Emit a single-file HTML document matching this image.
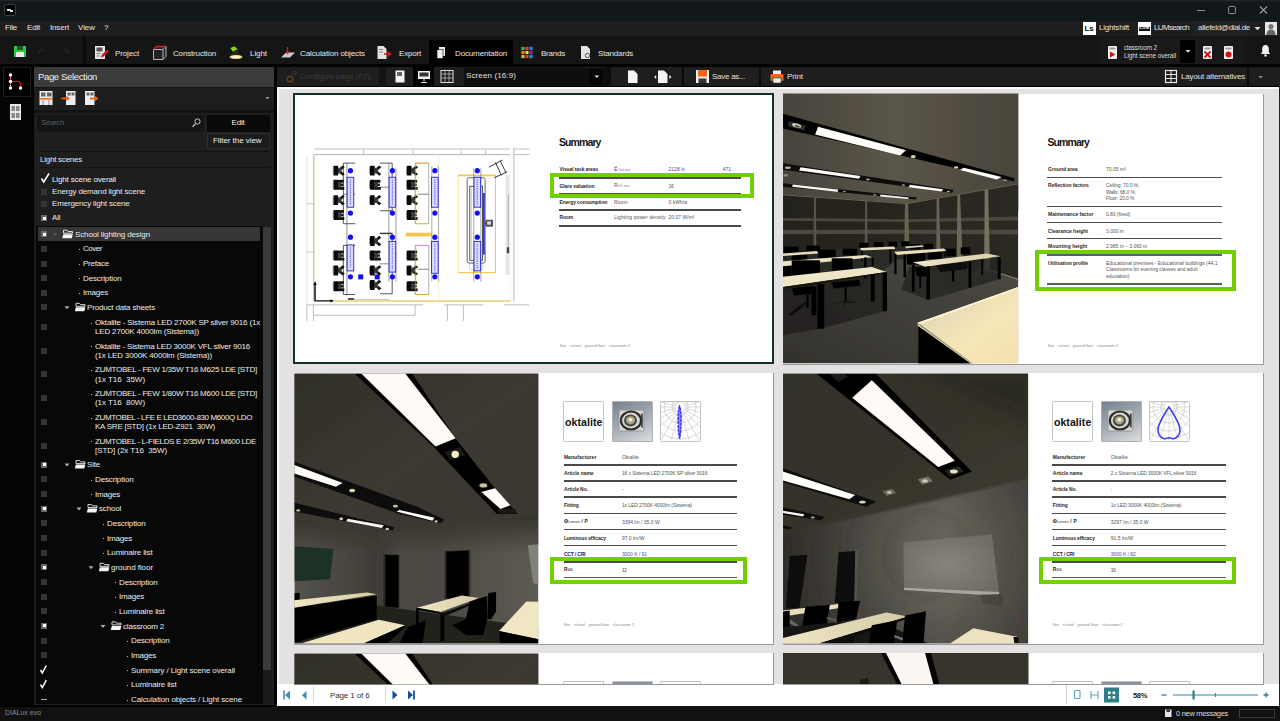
<!DOCTYPE html>
<html><head><meta charset="utf-8"><title>DIALux evo</title>
<style>
html,body{margin:0;padding:0;background:#000;}
body{width:1280px;height:721px;position:relative;overflow:hidden;font-family:"Liberation Sans",sans-serif;}
.t{position:absolute;white-space:pre;display:block;}
.r{position:absolute;}
svg{position:absolute;left:0;top:0;}
</style></head><body>
<div class="r" style="left:0.00px;top:0.00px;width:1280.00px;height:20.50px;background:#12171a;background:linear-gradient(#22292d 0,#161b1e 1.500px,#12171a 3px);"></div>
<div class="r" style="left:0.00px;top:20.50px;width:1280.00px;height:15.50px;background:#1e1e1e;"></div>
<div class="r" style="left:0.00px;top:36.00px;width:1280.00px;height:28.00px;background:#151515;"></div>
<div class="r" style="left:0.00px;top:63.50px;width:1280.00px;height:3.50px;background:#020202;"></div>
<div class="r" style="left:4.00px;top:4.00px;width:12.00px;height:12.00px;background:#000;border:1px solid #3a3d40;border-radius:2px;box-sizing:border-box;"></div>
<div class="r" style="left:7.00px;top:9.00px;width:4.00px;height:1.50px;background:#ddd;"></div>
<div class="r" style="left:10.00px;top:10.00px;width:3.00px;height:1.50px;background:#ddd;"></div>
<div class="r" style="left:1197.00px;top:10.00px;width:8.00px;height:1.00px;background:#8a8d90;"></div>
<div class="r" style="left:1228.00px;top:6.00px;width:8.00px;height:8.00px;background:transparent;border:1px solid #8a8d90;border-radius:1.5px;box-sizing:border-box;"></div>
<svg width="1280" height="20" viewBox="0 0 1280 20"><path d="M1260 6.500l7 7M1267 6.500l-7 7" stroke="#9a9da0" stroke-width="1.100" fill="none"/></svg>
<span class="t" style="left:5.00px;top:23.20px;font-size:8.00px;line-height:9.60px;color:#e6e6e6;letter-spacing:-0.223px;">File</span>
<span class="t" style="left:27.00px;top:23.20px;font-size:8.00px;line-height:9.60px;color:#e6e6e6;letter-spacing:-0.196px;">Edit</span>
<span class="t" style="left:50.00px;top:23.20px;font-size:8.00px;line-height:9.60px;color:#e6e6e6;letter-spacing:-0.168px;">Insert</span>
<span class="t" style="left:78.00px;top:23.20px;font-size:8.00px;line-height:9.60px;color:#e6e6e6;letter-spacing:-0.049px;">View</span>
<span class="t" style="left:104.00px;top:23.20px;font-size:8.00px;line-height:9.60px;color:#e6e6e6;">?</span>
<div class="r" style="left:1083.00px;top:22.00px;width:13.00px;height:13.00px;background:#fff;"></div>
<span class="t" style="left:1084.50px;top:23.70px;font-size:8.00px;line-height:9.60px;color:#111;letter-spacing:-0.168px;font-weight:bold;">Ls</span>
<span class="t" style="left:1099.00px;top:23.20px;font-size:8.00px;line-height:9.60px;color:#e0e0e0;letter-spacing:-0.202px;">Lightshift</span>
<div class="r" style="left:1138.00px;top:22.00px;width:13.00px;height:13.00px;background:#fff;"></div>
<div class="r" style="left:1139.00px;top:26.50px;width:11.00px;height:4.50px;background:#111;"></div>
<span class="t" style="left:1139.50px;top:26.30px;font-size:4.00px;line-height:4.80px;color:#fff;letter-spacing:0.445px;font-weight:bold;">LUM</span>
<span class="t" style="left:1154.00px;top:23.20px;font-size:8.00px;line-height:9.60px;color:#e0e0e0;letter-spacing:-0.656px;">LUMsearch</span>
<div class="r" style="left:1194.00px;top:21.00px;width:54.00px;height:15.00px;background:#222;"></div>
<span class="t" style="left:1198.00px;top:23.20px;font-size:8.00px;line-height:9.60px;color:#e0e0e0;letter-spacing:-0.315px;">allefeld@dial.de</span>
<svg width="1280" height="40" viewBox="0 0 1280 40"><path d="M1254.5 27l3 3.2l3-3.2z" fill="#e0e0e0"/></svg>
<div class="r" style="left:1265.00px;top:22.00px;width:12.00px;height:13.00px;background:#e8e8e8;"></div>
<svg width="1280" height="40" viewBox="0 0 1280 40"><circle cx="1271" cy="26.5" r="2.6" fill="#777"/><path d="M1266.5 35c0-4 2-5.5 4.5-5.5s4.5 1.500 4.500 5.500z" fill="#666"/></svg>
<div class="r" style="left:83.00px;top:36.00px;width:2.50px;height:28.00px;background:#0a0a0a;"></div>
<div class="r" style="left:14.00px;top:46.00px;width:12.00px;height:11.00px;background:#2fc63a;"></div>
<div class="r" style="left:17.00px;top:46.00px;width:6.00px;height:4.00px;background:#1a5a20;"></div>
<div class="r" style="left:16.00px;top:52.00px;width:8.00px;height:5.00px;background:#f4e8f0;"></div>
<span class="t" style="left:37.00px;top:46.60px;font-size:9.00px;line-height:10.80px;color:#2a2a2a;">↶</span>
<span class="t" style="left:62.00px;top:46.60px;font-size:9.00px;line-height:10.80px;color:#2a2a2a;">↷</span>
<div class="r" style="left:429.00px;top:40.00px;width:84.00px;height:24.00px;background:#000;"></div>
<span class="t" style="left:115.00px;top:48.70px;font-size:8.00px;line-height:9.60px;color:#e6e6e6;letter-spacing:-0.128px;">Project</span>
<span class="t" style="left:173.00px;top:48.70px;font-size:8.00px;line-height:9.60px;color:#e6e6e6;letter-spacing:-0.159px;">Construction</span>
<span class="t" style="left:250.00px;top:48.70px;font-size:8.00px;line-height:9.60px;color:#e6e6e6;letter-spacing:-0.069px;">Light</span>
<span class="t" style="left:300.00px;top:48.70px;font-size:8.00px;line-height:9.60px;color:#e6e6e6;letter-spacing:-0.113px;">Calculation objects</span>
<span class="t" style="left:399.00px;top:48.70px;font-size:8.00px;line-height:9.60px;color:#e6e6e6;letter-spacing:-0.187px;">Export</span>
<span class="t" style="left:455.00px;top:48.70px;font-size:8.00px;line-height:9.60px;color:#e6e6e6;letter-spacing:-0.139px;">Documentation</span>
<span class="t" style="left:541.00px;top:48.70px;font-size:8.00px;line-height:9.60px;color:#e6e6e6;letter-spacing:-0.224px;">Brands</span>
<span class="t" style="left:598.00px;top:48.70px;font-size:8.00px;line-height:9.60px;color:#e6e6e6;letter-spacing:-0.163px;">Standards</span>
<svg width="1280" height="70" viewBox="0 0 1280 70">
<!-- project -->
<rect x="95" y="46" width="10" height="13" fill="#e8e8e8"/><rect x="96.500" y="47.500" width="6" height="4" fill="#555"/><rect x="96.500" y="53" width="4" height="1" fill="#777"/><rect x="96.500" y="55.500" width="4" height="1" fill="#777"/>
<path d="M101 58l1-3.500l5-5l1.800 1.800l-5 5z" fill="#d01818"/>
<!-- construction -->
<path d="M153.500 49.500l3-3h9.500v10l-3 3h-9.500z" fill="#222" stroke="#b8b8b8" stroke-width="1"/><path d="M153.500 49.500h9.500v10M163 49.500l3-3" stroke="#b8b8b8" stroke-width="1" fill="none"/><path d="M153.500 49.500l3-3h9.500" stroke="#e02020" stroke-width="1.300" fill="none"/>
<!-- light -->
<path d="M232.500 50.900l4.600-1.200l3.400 5.500h-9.400z" fill="#2e2410"/><path d="M230.400 48l4.100-1.700l3.100 3l-4.800 2.100z" fill="#7ed321"/><ellipse cx="236" cy="57" rx="6.500" ry="2" fill="#d9cf8e"/><ellipse cx="236" cy="56.800" rx="4.500" ry="1.200" fill="#fbf4c8"/>
<!-- calc objects -->
<path d="M281 57.500l5-5h9l-5 5z" fill="#c8c8c8"/><path d="M287.500 47v6" stroke="#d02020" stroke-width="1.300"/><path d="M285.500 51.500l2 3l2-3z" fill="#d02020"/>
<!-- export -->
<path d="M377.500 46h6l3 3v10h-9z" fill="#e4e4e4"/><path d="M384 54h6M387.500 51.500l3 2.500l-3 2.500" stroke="#d01818" stroke-width="1.600" fill="none"/><rect x="379" y="49" width="4" height="1" fill="#888"/><rect x="379" y="51.500" width="4" height="1" fill="#888"/>
<!-- documentation -->
<rect x="439" y="47" width="6" height="9" fill="#f0f0f0"/><rect x="437" y="49.500" width="6" height="9" fill="#f0f0f0" stroke="#000" stroke-width=".6"/>
<!-- brands -->
<rect x="520" y="46" width="14" height="13" fill="#222" rx="1"/>
<rect x="521.500" y="47" width="3" height="3" fill="#4caf50"/><rect x="525.500" y="47" width="3" height="3" fill="#e53935"/><rect x="529.500" y="47" width="3" height="3" fill="#1e88e5"/>
<rect x="521.500" y="51" width="3" height="3" fill="#fb8c00"/><rect x="525.500" y="51" width="3" height="3" fill="#fdd835"/><rect x="529.500" y="51" width="3" height="3" fill="#8e24aa"/>
<rect x="521.500" y="55" width="3" height="3" fill="#c0ca33"/><rect x="525.500" y="55" width="3" height="3" fill="#e53935"/><rect x="529.500" y="55" width="3" height="3" fill="#039be5"/>
<!-- standards -->
<path d="M581 46h6l3 3v10h-9z" fill="#e4e4e4"/><circle cx="587.500" cy="55.500" r="2.200" fill="none" stroke="#555" stroke-width="1"/>
</svg>
<div class="r" style="left:1099.00px;top:37.00px;width:146.00px;height:26.50px;background:#191919;"></div>
<div class="r" style="left:1180.00px;top:40.00px;width:15.00px;height:23.00px;background:#000;"></div>
<span class="t" style="left:1124.00px;top:44.10px;font-size:6.50px;line-height:7.80px;color:#dcdcdc;letter-spacing:-0.185px;">classroom 2</span>
<span class="t" style="left:1124.00px;top:51.60px;font-size:6.50px;line-height:7.80px;color:#dcdcdc;letter-spacing:-0.116px;">Light scene overall</span>
<svg width="1280" height="70" viewBox="0 0 1280 70">
<rect x="1108" y="46" width="9" height="13" rx="1" fill="#f2f2f2"/><rect x="1109.500" y="47.500" width="6" height="2" fill="#999"/><path d="M1110 51.500l5.500 3l-5.500 3z" fill="#d01010"/>
<path d="M1185.500 50l2.500 2.800l2.500-2.800z" fill="#e0e0e0"/>
<rect x="1203" y="46" width="9" height="13" rx="1" fill="#f2f2f2"/><rect x="1204.500" y="47.500" width="6" height="2" fill="#999"/><path d="M1204.500 51.500l6 6M1210.500 51.500l-6 6" stroke="#d01010" stroke-width="1.800"/>
<rect x="1224" y="46" width="9" height="13" rx="1" fill="#f2f2f2"/><rect x="1225.500" y="47.500" width="6" height="2" fill="#999"/><circle cx="1228.500" cy="54.500" r="3" fill="#d01010"/>
<path d="M1265.500 45c2.300 0 3.300 1.800 3.300 4v3l1.400 2h-9.400l1.400-2v-3c0-2.200 1-4 3.300-4z" fill="#f0f0f0"/><circle cx="1265.500" cy="55.500" r="1.200" fill="#f0f0f0"/>
</svg>
<div class="r" style="left:0.00px;top:67.00px;width:33.00px;height:639.00px;background:#050505;"></div>
<div class="r" style="left:3.00px;top:67.00px;width:28.00px;height:30.00px;background:#000;border:1px solid #1c1c1c;box-sizing:border-box;"></div>
<svg width="40" height="130" viewBox="0 0 40 130">
<path d="M10.500 75v12.500M10.500 81.500h7.500q2.500 0 2.500 2.500v3.500" stroke="#d01818" stroke-width="1.200" fill="none"/>
<path d="M10.500 75v12" stroke="#eee" stroke-width="1" stroke-dasharray="1 1.500"/>
<circle cx="10.500" cy="75" r="1.700" fill="#fff"/><circle cx="10.500" cy="81.500" r="1.700" fill="#fff"/><circle cx="10.500" cy="88" r="1.700" fill="#fff"/><circle cx="20.500" cy="88" r="1.700" fill="#fff"/>
<rect x="10" y="104" width="11" height="16" fill="#e8e8e8"/>
<rect x="11.500" y="106" width="3.500" height="5" fill="#888"/><rect x="16" y="106" width="3.500" height="5" fill="#888"/><rect x="11.500" y="113" width="3.500" height="5" fill="#888"/><rect x="16" y="113" width="3.500" height="5" fill="#888"/>
</svg>
<div class="r" style="left:277.00px;top:66.80px;width:1003.00px;height:19.70px;background:#1e1e1e;"></div>
<div class="r" style="left:379.00px;top:67.00px;width:7.00px;height:19.50px;background:#141414;"></div>
<span class="t" style="left:300.00px;top:71.70px;font-size:8.00px;line-height:9.60px;color:#3c3c3c;letter-spacing:-0.084px;">Configure page (F2)</span>
<div class="r" style="left:413.00px;top:67.00px;width:21.00px;height:19.50px;background:#000;"></div>
<div class="r" style="left:463.50px;top:68.00px;width:141.00px;height:18.00px;background:#0e0e0e;"></div>
<div class="r" style="left:590.00px;top:69.00px;width:13.00px;height:16.00px;background:#060606;"></div>
<span class="t" style="left:466.00px;top:71.20px;font-size:8.00px;line-height:9.60px;color:#e0e0e0;letter-spacing:0.118px;">Screen (16:9)</span>
<div class="r" style="left:604.50px;top:67.00px;width:6.00px;height:19.50px;background:#0c0c0c;"></div>
<div class="r" style="left:682.00px;top:67.00px;width:1.50px;height:19.50px;background:#0a0a0a;"></div>
<div class="r" style="left:759.00px;top:67.00px;width:1.50px;height:19.50px;background:#0a0a0a;"></div>
<span class="t" style="left:712.00px;top:71.70px;font-size:8.00px;line-height:9.60px;color:#e0e0e0;letter-spacing:-0.257px;">Save as...</span>
<span class="t" style="left:787.00px;top:72.20px;font-size:8.00px;line-height:9.60px;color:#e0e0e0;letter-spacing:-0.090px;">Print</span>
<span class="t" style="left:1181.00px;top:72.20px;font-size:8.00px;line-height:9.60px;color:#e0e0e0;letter-spacing:-0.166px;">Layout alternatives</span>
<div class="r" style="left:1247.00px;top:67.00px;width:1.50px;height:19.50px;background:#0a0a0a;"></div>
<svg width="1280" height="90" viewBox="0 0 1280 90">
<circle cx="290" cy="79" r="2.800" fill="none" stroke="#5a4418" stroke-width="1.400"/><circle cx="294.500" cy="73" r="1.800" fill="none" stroke="#3c3c3c" stroke-width="1"/>
<rect x="395.500" y="70.500" width="9" height="12" fill="#f4f4f4"/><rect x="397" y="72" width="5" height="4" fill="#666"/>
<rect x="418" y="71" width="12" height="8" fill="#f0f0f0"/><rect x="419.500" y="72.500" width="9" height="4" fill="#333"/><path d="M424 79v2.500M421 82.500h6" stroke="#ddd" stroke-width="1"/>
<rect x="441" y="70.500" width="12" height="12" fill="#1c1c1c" stroke="#ddd" stroke-width="1"/><path d="M441 74h12M445 70.500v12M449 70.500v12M441 78h12" stroke="#bbb" stroke-width=".8"/>
<path d="M594.500 75.500l2.300 2.600l2.300-2.600z" fill="#e8e8e8"/>
<path d="M628 70.500h6l3.500 3.500v9h-9.500z" fill="#f6f6f6"/>
<path d="M658 70.500h6l3.500 3.500v9h-9.500z" fill="#f6f6f6"/><path d="M654 77l2.200-2v4zM671.500 77l-2.200-2v4z" fill="#eee"/>
<rect x="696" y="70" width="13" height="13" fill="#eee"/><rect x="698" y="70" width="9" height="6.500" fill="#f0641e"/><rect x="698.500" y="78.500" width="8" height="4.500" fill="#333"/>
<rect x="770.500" y="74" width="13" height="7" rx="1" fill="#f0641e"/><rect x="773" y="70.500" width="8" height="3.500" fill="#eee"/><rect x="773" y="78" width="8" height="5" fill="#eee" stroke="#333" stroke-width=".6"/>
<rect x="1165.500" y="70.500" width="11" height="12" fill="none" stroke="#e8e8e8" stroke-width="1.200"/><path d="M1165.500 74.500h11M1165.500 78.500h11M1171 70.500v12" stroke="#e8e8e8" stroke-width="1"/>
<path d="M1258.500 76l2.200 2.500l2.200-2.500z" fill="#888"/>
</svg>
<div class="r" style="left:277.00px;top:86.50px;width:1001.50px;height:597.50px;background:#e3e1e2;"></div>
<div class="r" style="left:277.00px;top:86.50px;width:1001.50px;height:2.00px;background:#fbfbfb;"></div>
<div class="r" style="left:277.00px;top:86.50px;width:1.50px;height:597.50px;background:#f6f6f6;"></div>
<div class="r" style="left:1278.50px;top:86.50px;width:1.50px;height:620.00px;background:#222;"></div>
<div class="r" style="left:34.00px;top:67.00px;width:239.50px;height:639.00px;background:#1e1e1e;"></div>
<div class="r" style="left:34.00px;top:67.00px;width:239.50px;height:19.50px;background:#3b3b3b;"></div>
<span class="t" style="left:38.00px;top:71.30px;font-size:9.50px;line-height:11.40px;color:#f0f0f0;letter-spacing:-0.350px;">Page Selection</span>
<div class="r" style="left:34.00px;top:86.50px;width:239.50px;height:1.50px;background:#141414;"></div>
<div class="r" style="left:34.00px;top:110.00px;width:239.50px;height:3.00px;background:#121212;"></div>
<svg width="280" height="120" viewBox="0 0 280 120">
<g>
<rect x="39.500" y="91" width="13" height="14" fill="#eee"/><rect x="41" y="92.500" width="4.500" height="4" fill="#666"/><rect x="47" y="92.500" width="4.500" height="4" fill="#666"/><rect x="39.500" y="98" width="13" height="1.600" fill="#f07020"/><path d="M43 100v5M49 100v5" stroke="#888" stroke-width="1"/>
<rect x="66" y="91" width="9.500" height="14" fill="#eee"/><rect x="67.500" y="92.500" width="3" height="3" fill="#666"/><rect x="71.500" y="92.500" width="3" height="3" fill="#666"/><path d="M61.500 98.500h6" stroke="#f06010" stroke-width="1.800"/><path d="M66.500 95.800l3.500 2.700l-3.500 2.700z" fill="#f06010"/>
<rect x="85" y="91" width="9.500" height="14" fill="#eee"/><rect x="86.500" y="92.500" width="3" height="3" fill="#666"/><rect x="90.500" y="92.500" width="3" height="3" fill="#666"/><path d="M90 98.500h6" stroke="#f06010" stroke-width="1.800"/><path d="M95 95.800l3.500 2.700l-3.500 2.700z" fill="#f06010"/>
<path d="M265.500 97l2 2.300l2-2.300z" fill="#999"/>
</g></svg>
<div class="r" style="left:37.00px;top:115.00px;width:166.50px;height:16.50px;background:#151515;"></div>
<span class="t" style="left:41.00px;top:118.20px;font-size:8.00px;line-height:9.60px;color:#5a5a5a;letter-spacing:-0.391px;font-style:italic;">Search</span>
<svg width="280" height="140" viewBox="0 0 280 140"><circle cx="197.500" cy="121.500" r="2.600" fill="none" stroke="#c8c8c8" stroke-width="1"/><path d="M195.600 123.600l-3 3.200" stroke="#c8c8c8" stroke-width="1.300"/></svg>
<div class="r" style="left:207.00px;top:115.00px;width:62.50px;height:16.50px;background:#090909;"></div>
<span class="t" style="left:231.50px;top:118.20px;font-size:8.00px;line-height:9.60px;color:#f0f0f0;letter-spacing:-0.196px;">Edit</span>
<div class="r" style="left:206.50px;top:133.00px;width:63.00px;height:16.00px;background:#1c1c1c;border:1px solid #2c2c2c;box-sizing:border-box;"></div>
<span class="t" style="left:213.00px;top:136.00px;font-size:8.00px;line-height:9.60px;color:#f0f0f0;letter-spacing:-0.056px;">Filter the view</span>
<div class="r" style="left:39.00px;top:151.00px;width:230.50px;height:1.00px;background:#141414;"></div>
<span class="t" style="left:40.00px;top:154.70px;font-size:8.00px;line-height:9.60px;color:#e8e8e8;letter-spacing:-0.243px;">Light scenes</span>
<div class="r" style="left:39.00px;top:167.00px;width:230.50px;height:1.00px;background:#141414;"></div>
<svg width="280" height="230" viewBox="0 0 280 230"><path d="M41.500 178.500l2.200 3.500l5.300-8.500" stroke="#fff" stroke-width="1.500" fill="none"/></svg>
<span class="t" style="left:52.00px;top:175.20px;font-size:8.00px;line-height:9.60px;color:#f0f0f0;letter-spacing:-0.142px;">Light scene overall</span>
<div class="r" style="left:41.00px;top:188.50px;width:6.00px;height:6.00px;background:#343434;background-image:linear-gradient(90deg,transparent 45%,#1e1e1e 45%,#1e1e1e 55%,transparent 55%),linear-gradient(0deg,transparent 45%,#1e1e1e 45%,#1e1e1e 55%,transparent 55%);"></div>
<span class="t" style="left:52.00px;top:186.70px;font-size:8.00px;line-height:9.60px;color:#e8e8e8;letter-spacing:-0.158px;">Energy demand light scene</span>
<div class="r" style="left:41.00px;top:200.50px;width:6.00px;height:6.00px;background:#343434;background-image:linear-gradient(90deg,transparent 45%,#1e1e1e 45%,#1e1e1e 55%,transparent 55%),linear-gradient(0deg,transparent 45%,#1e1e1e 45%,#1e1e1e 55%,transparent 55%);"></div>
<span class="t" style="left:52.00px;top:198.70px;font-size:8.00px;line-height:9.60px;color:#e8e8e8;letter-spacing:-0.163px;">Emergency light scene</span>
<div class="r" style="left:41.00px;top:215.00px;width:6.00px;height:6.00px;background:#6a6a6a;"></div><div class="r" style="left:42.50px;top:216.50px;width:3.00px;height:3.00px;background:#fff;"></div>
<span class="t" style="left:52.00px;top:213.20px;font-size:8.00px;line-height:9.60px;color:#e8e8e8;letter-spacing:-0.130px;">All</span>
<div class="r" style="left:36.00px;top:226.00px;width:226.50px;height:478.00px;background:#080808;"></div>
<div class="r" style="left:38.00px;top:227.00px;width:222.00px;height:14.00px;background:#363636;"></div>
<div class="r" style="left:262.50px;top:226.00px;width:9.00px;height:478.00px;background:#1a1a1a;"></div>
<div class="r" style="left:262.80px;top:227.00px;width:8.50px;height:443.00px;background:#3a3a3a;"></div>
<div class="r" style="left:41.00px;top:231.20px;width:6.00px;height:6.00px;background:#6a6a6a;"></div><div class="r" style="left:42.50px;top:232.70px;width:3.00px;height:3.00px;background:#fff;"></div>
<svg width="280" height="721" viewBox="0 0 280 721"><path d="M52.5 233.2h5l-2.500 3z" fill="#555"/></svg>
<svg width="280" height="721" viewBox="0 0 280 721"><path d="M63.5 230.2h3.500l1 1.300h4.500v1.700h-9z" fill="none" stroke="#f0f0f0" stroke-width=".9"/><path d="M63.3 234.2h9.500l-1 4h-9.500z" fill="#f4f4f4"/></svg>
<span class="t" style="left:75.00px;top:229.90px;font-size:8.00px;line-height:9.60px;color:#ececec;letter-spacing:-0.129px;">School lighting design</span>
<div class="r" style="left:41.00px;top:245.75px;width:6.00px;height:6.00px;background:#343434;background-image:linear-gradient(90deg,transparent 45%,#1e1e1e 45%,#1e1e1e 55%,transparent 55%),linear-gradient(0deg,transparent 45%,#1e1e1e 45%,#1e1e1e 55%,transparent 55%);"></div>
<div class="r" style="left:79.00px;top:249.05px;width:1.00px;height:1.00px;background:#bbb;"></div>
<span class="t" style="left:83.00px;top:244.45px;font-size:8.00px;line-height:9.60px;color:#ececec;letter-spacing:-0.468px;">Cover</span>
<div class="r" style="left:41.00px;top:260.50px;width:6.00px;height:6.00px;background:#343434;background-image:linear-gradient(90deg,transparent 45%,#1e1e1e 45%,#1e1e1e 55%,transparent 55%),linear-gradient(0deg,transparent 45%,#1e1e1e 45%,#1e1e1e 55%,transparent 55%);"></div>
<div class="r" style="left:79.00px;top:263.80px;width:1.00px;height:1.00px;background:#bbb;"></div>
<span class="t" style="left:83.00px;top:259.20px;font-size:8.00px;line-height:9.60px;color:#ececec;letter-spacing:-0.224px;">Preface</span>
<div class="r" style="left:41.00px;top:275.10px;width:6.00px;height:6.00px;background:#343434;background-image:linear-gradient(90deg,transparent 45%,#1e1e1e 45%,#1e1e1e 55%,transparent 55%),linear-gradient(0deg,transparent 45%,#1e1e1e 45%,#1e1e1e 55%,transparent 55%);"></div>
<div class="r" style="left:79.00px;top:278.40px;width:1.00px;height:1.00px;background:#bbb;"></div>
<span class="t" style="left:83.00px;top:273.80px;font-size:8.00px;line-height:9.60px;color:#ececec;letter-spacing:-0.138px;">Description</span>
<div class="r" style="left:41.00px;top:289.75px;width:6.00px;height:6.00px;background:#343434;background-image:linear-gradient(90deg,transparent 45%,#1e1e1e 45%,#1e1e1e 55%,transparent 55%),linear-gradient(0deg,transparent 45%,#1e1e1e 45%,#1e1e1e 55%,transparent 55%);"></div>
<div class="r" style="left:79.00px;top:293.05px;width:1.00px;height:1.00px;background:#bbb;"></div>
<span class="t" style="left:83.00px;top:288.45px;font-size:8.00px;line-height:9.60px;color:#ececec;letter-spacing:-0.205px;">Images</span>
<div class="r" style="left:41.00px;top:304.30px;width:6.00px;height:6.00px;background:#343434;background-image:linear-gradient(90deg,transparent 45%,#1e1e1e 45%,#1e1e1e 55%,transparent 55%),linear-gradient(0deg,transparent 45%,#1e1e1e 45%,#1e1e1e 55%,transparent 55%);"></div>
<svg width="280" height="721" viewBox="0 0 280 721"><path d="M64.5 306.3h5l-2.500 3z" fill="#aaa"/></svg>
<svg width="280" height="721" viewBox="0 0 280 721"><path d="M76.0 303.3h3.500l1 1.300h4.500v1.700h-9z" fill="none" stroke="#f0f0f0" stroke-width=".9"/><path d="M75.8 307.3h9.500l-1 4h-9.500z" fill="#f4f4f4"/></svg>
<span class="t" style="left:87.00px;top:303.00px;font-size:8.00px;line-height:9.60px;color:#ececec;letter-spacing:-0.166px;">Product data sheets</span>
<div class="r" style="left:41.00px;top:323.90px;width:6.00px;height:6.00px;background:#343434;background-image:linear-gradient(90deg,transparent 45%,#1e1e1e 45%,#1e1e1e 55%,transparent 55%),linear-gradient(0deg,transparent 45%,#1e1e1e 45%,#1e1e1e 55%,transparent 55%);"></div>
<div class="r" style="left:91.00px;top:322.60px;width:1.00px;height:1.00px;background:#bbb;"></div>
<span class="t" style="left:95.00px;top:317.90px;font-size:8.00px;line-height:9.60px;color:#ececec;letter-spacing:-0.176px;">Oktalite - Sistema LED 2700K SP silver 9016 (1x</span>
<span class="t" style="left:95.00px;top:327.30px;font-size:8.00px;line-height:9.60px;color:#ececec;letter-spacing:-0.166px;">LED 2700K 4000lm (Sistema))</span>
<div class="r" style="left:41.00px;top:347.50px;width:6.00px;height:6.00px;background:#343434;background-image:linear-gradient(90deg,transparent 45%,#1e1e1e 45%,#1e1e1e 55%,transparent 55%),linear-gradient(0deg,transparent 45%,#1e1e1e 45%,#1e1e1e 55%,transparent 55%);"></div>
<div class="r" style="left:91.00px;top:346.20px;width:1.00px;height:1.00px;background:#bbb;"></div>
<span class="t" style="left:95.00px;top:341.50px;font-size:8.00px;line-height:9.60px;color:#ececec;letter-spacing:-0.199px;">Oktalite - Sistema LED 3000K VFL silver 9016</span>
<span class="t" style="left:95.00px;top:350.90px;font-size:8.00px;line-height:9.60px;color:#ececec;letter-spacing:-0.156px;">(1x LED 3000K 4000lm (Sistema))</span>
<div class="r" style="left:41.00px;top:371.40px;width:6.00px;height:6.00px;background:#343434;background-image:linear-gradient(90deg,transparent 45%,#1e1e1e 45%,#1e1e1e 55%,transparent 55%),linear-gradient(0deg,transparent 45%,#1e1e1e 45%,#1e1e1e 55%,transparent 55%);"></div>
<div class="r" style="left:91.00px;top:370.10px;width:1.00px;height:1.00px;background:#bbb;"></div>
<span class="t" style="left:95.00px;top:365.40px;font-size:8.00px;line-height:9.60px;color:#ececec;letter-spacing:-0.254px;">ZUMTOBEL - FEW 1/35W T16 M625 LDE [STD]</span>
<span class="t" style="left:95.00px;top:374.80px;font-size:8.00px;line-height:9.60px;color:#ececec;letter-spacing:-0.041px;">(1x T16  35W)</span>
<div class="r" style="left:41.00px;top:395.00px;width:6.00px;height:6.00px;background:#343434;background-image:linear-gradient(90deg,transparent 45%,#1e1e1e 45%,#1e1e1e 55%,transparent 55%),linear-gradient(0deg,transparent 45%,#1e1e1e 45%,#1e1e1e 55%,transparent 55%);"></div>
<div class="r" style="left:91.00px;top:393.70px;width:1.00px;height:1.00px;background:#bbb;"></div>
<span class="t" style="left:95.00px;top:389.00px;font-size:8.00px;line-height:9.60px;color:#ececec;letter-spacing:-0.254px;">ZUMTOBEL - FEW 1/80W T16 M600 LDE [STD]</span>
<span class="t" style="left:95.00px;top:398.40px;font-size:8.00px;line-height:9.60px;color:#ececec;letter-spacing:-0.041px;">(1x T16  80W)</span>
<div class="r" style="left:41.00px;top:418.80px;width:6.00px;height:6.00px;background:#343434;background-image:linear-gradient(90deg,transparent 45%,#1e1e1e 45%,#1e1e1e 55%,transparent 55%),linear-gradient(0deg,transparent 45%,#1e1e1e 45%,#1e1e1e 55%,transparent 55%);"></div>
<div class="r" style="left:91.00px;top:417.50px;width:1.00px;height:1.00px;background:#bbb;"></div>
<span class="t" style="left:95.00px;top:412.80px;font-size:8.00px;line-height:9.60px;color:#ececec;letter-spacing:-0.373px;">ZUMTOBEL - LFE E LED3600-830 M600Q LDO</span>
<span class="t" style="left:95.00px;top:422.20px;font-size:8.00px;line-height:9.60px;color:#ececec;letter-spacing:-0.230px;">KA SRE [STD] (1x LED-Z921  30W)</span>
<div class="r" style="left:41.00px;top:442.70px;width:6.00px;height:6.00px;background:#343434;background-image:linear-gradient(90deg,transparent 45%,#1e1e1e 45%,#1e1e1e 55%,transparent 55%),linear-gradient(0deg,transparent 45%,#1e1e1e 45%,#1e1e1e 55%,transparent 55%);"></div>
<div class="r" style="left:91.00px;top:441.40px;width:1.00px;height:1.00px;background:#bbb;"></div>
<span class="t" style="left:95.00px;top:436.70px;font-size:8.00px;line-height:9.60px;color:#ececec;letter-spacing:-0.328px;">ZUMTOBEL - L-FIELDS E 2/35W T16 M600 LDE</span>
<span class="t" style="left:95.00px;top:446.10px;font-size:8.00px;line-height:9.60px;color:#ececec;letter-spacing:-0.063px;">[STD] (2x T16  35W)</span>
<div class="r" style="left:41.00px;top:461.60px;width:6.00px;height:6.00px;background:#6a6a6a;"></div><div class="r" style="left:42.50px;top:463.10px;width:3.00px;height:3.00px;background:#fff;"></div>
<svg width="280" height="721" viewBox="0 0 280 721"><path d="M64.5 463.6h5l-2.500 3z" fill="#aaa"/></svg>
<svg width="280" height="721" viewBox="0 0 280 721"><path d="M76.0 460.6h3.500l1 1.300h4.500v1.700h-9z" fill="none" stroke="#f0f0f0" stroke-width=".9"/><path d="M75.8 464.6h9.500l-1 4h-9.500z" fill="#f4f4f4"/></svg>
<span class="t" style="left:87.00px;top:460.30px;font-size:8.00px;line-height:9.60px;color:#ececec;letter-spacing:-0.196px;">Site</span>
<div class="r" style="left:41.00px;top:476.30px;width:6.00px;height:6.00px;background:#343434;background-image:linear-gradient(90deg,transparent 45%,#1e1e1e 45%,#1e1e1e 55%,transparent 55%),linear-gradient(0deg,transparent 45%,#1e1e1e 45%,#1e1e1e 55%,transparent 55%);"></div>
<div class="r" style="left:91.00px;top:479.60px;width:1.00px;height:1.00px;background:#bbb;"></div>
<span class="t" style="left:95.00px;top:475.00px;font-size:8.00px;line-height:9.60px;color:#ececec;letter-spacing:-0.138px;">Description</span>
<div class="r" style="left:41.00px;top:491.00px;width:6.00px;height:6.00px;background:#343434;background-image:linear-gradient(90deg,transparent 45%,#1e1e1e 45%,#1e1e1e 55%,transparent 55%),linear-gradient(0deg,transparent 45%,#1e1e1e 45%,#1e1e1e 55%,transparent 55%);"></div>
<div class="r" style="left:91.00px;top:494.30px;width:1.00px;height:1.00px;background:#bbb;"></div>
<span class="t" style="left:95.00px;top:489.70px;font-size:8.00px;line-height:9.60px;color:#ececec;letter-spacing:-0.205px;">Images</span>
<div class="r" style="left:41.00px;top:505.60px;width:6.00px;height:6.00px;background:#6a6a6a;"></div><div class="r" style="left:42.50px;top:507.10px;width:3.00px;height:3.00px;background:#fff;"></div>
<svg width="280" height="721" viewBox="0 0 280 721"><path d="M76.5 507.6h5l-2.500 3z" fill="#aaa"/></svg>
<svg width="280" height="721" viewBox="0 0 280 721"><path d="M88.0 504.6h3.500l1 1.300h4.500v1.700h-9z" fill="none" stroke="#f0f0f0" stroke-width=".9"/><path d="M87.8 508.6h9.500l-1 4h-9.500z" fill="#f4f4f4"/></svg>
<span class="t" style="left:99.00px;top:504.30px;font-size:8.00px;line-height:9.60px;color:#ececec;letter-spacing:-0.187px;">school</span>
<div class="r" style="left:41.00px;top:520.30px;width:6.00px;height:6.00px;background:#343434;background-image:linear-gradient(90deg,transparent 45%,#1e1e1e 45%,#1e1e1e 55%,transparent 55%),linear-gradient(0deg,transparent 45%,#1e1e1e 45%,#1e1e1e 55%,transparent 55%);"></div>
<div class="r" style="left:103.00px;top:523.60px;width:1.00px;height:1.00px;background:#bbb;"></div>
<span class="t" style="left:107.00px;top:519.00px;font-size:8.00px;line-height:9.60px;color:#ececec;letter-spacing:-0.138px;">Description</span>
<div class="r" style="left:41.00px;top:535.00px;width:6.00px;height:6.00px;background:#343434;background-image:linear-gradient(90deg,transparent 45%,#1e1e1e 45%,#1e1e1e 55%,transparent 55%),linear-gradient(0deg,transparent 45%,#1e1e1e 45%,#1e1e1e 55%,transparent 55%);"></div>
<div class="r" style="left:103.00px;top:538.30px;width:1.00px;height:1.00px;background:#bbb;"></div>
<span class="t" style="left:107.00px;top:533.70px;font-size:8.00px;line-height:9.60px;color:#ececec;letter-spacing:-0.205px;">Images</span>
<div class="r" style="left:41.00px;top:549.60px;width:6.00px;height:6.00px;background:#343434;background-image:linear-gradient(90deg,transparent 45%,#1e1e1e 45%,#1e1e1e 55%,transparent 55%),linear-gradient(0deg,transparent 45%,#1e1e1e 45%,#1e1e1e 55%,transparent 55%);"></div>
<div class="r" style="left:103.00px;top:552.90px;width:1.00px;height:1.00px;background:#bbb;"></div>
<span class="t" style="left:107.00px;top:548.30px;font-size:8.00px;line-height:9.60px;color:#ececec;letter-spacing:-0.116px;">Luminaire list</span>
<div class="r" style="left:41.00px;top:564.30px;width:6.00px;height:6.00px;background:#6a6a6a;"></div><div class="r" style="left:42.50px;top:565.80px;width:3.00px;height:3.00px;background:#fff;"></div>
<svg width="280" height="721" viewBox="0 0 280 721"><path d="M88.5 566.3h5l-2.500 3z" fill="#aaa"/></svg>
<svg width="280" height="721" viewBox="0 0 280 721"><path d="M100.0 563.3h3.500l1 1.300h4.500v1.700h-9z" fill="none" stroke="#f0f0f0" stroke-width=".9"/><path d="M99.8 567.3h9.500l-1 4h-9.500z" fill="#f4f4f4"/></svg>
<span class="t" style="left:111.00px;top:563.00px;font-size:8.00px;line-height:9.60px;color:#ececec;letter-spacing:-0.058px;">ground floor</span>
<div class="r" style="left:41.00px;top:578.90px;width:6.00px;height:6.00px;background:#343434;background-image:linear-gradient(90deg,transparent 45%,#1e1e1e 45%,#1e1e1e 55%,transparent 55%),linear-gradient(0deg,transparent 45%,#1e1e1e 45%,#1e1e1e 55%,transparent 55%);"></div>
<div class="r" style="left:115.00px;top:582.20px;width:1.00px;height:1.00px;background:#bbb;"></div>
<span class="t" style="left:119.00px;top:577.60px;font-size:8.00px;line-height:9.60px;color:#ececec;letter-spacing:-0.138px;">Description</span>
<div class="r" style="left:41.00px;top:593.60px;width:6.00px;height:6.00px;background:#343434;background-image:linear-gradient(90deg,transparent 45%,#1e1e1e 45%,#1e1e1e 55%,transparent 55%),linear-gradient(0deg,transparent 45%,#1e1e1e 45%,#1e1e1e 55%,transparent 55%);"></div>
<div class="r" style="left:115.00px;top:596.90px;width:1.00px;height:1.00px;background:#bbb;"></div>
<span class="t" style="left:119.00px;top:592.30px;font-size:8.00px;line-height:9.60px;color:#ececec;letter-spacing:-0.205px;">Images</span>
<div class="r" style="left:41.00px;top:608.30px;width:6.00px;height:6.00px;background:#343434;background-image:linear-gradient(90deg,transparent 45%,#1e1e1e 45%,#1e1e1e 55%,transparent 55%),linear-gradient(0deg,transparent 45%,#1e1e1e 45%,#1e1e1e 55%,transparent 55%);"></div>
<div class="r" style="left:115.00px;top:611.60px;width:1.00px;height:1.00px;background:#bbb;"></div>
<span class="t" style="left:119.00px;top:607.00px;font-size:8.00px;line-height:9.60px;color:#ececec;letter-spacing:-0.116px;">Luminaire list</span>
<div class="r" style="left:41.00px;top:622.90px;width:6.00px;height:6.00px;background:#6a6a6a;"></div><div class="r" style="left:42.50px;top:624.40px;width:3.00px;height:3.00px;background:#fff;"></div>
<svg width="280" height="721" viewBox="0 0 280 721"><path d="M100.5 624.9h5l-2.500 3z" fill="#aaa"/></svg>
<svg width="280" height="721" viewBox="0 0 280 721"><path d="M112.0 621.9h3.500l1 1.300h4.500v1.700h-9z" fill="none" stroke="#f0f0f0" stroke-width=".9"/><path d="M111.8 625.9h9.500l-1 4h-9.500z" fill="#f4f4f4"/></svg>
<span class="t" style="left:123.00px;top:621.60px;font-size:8.00px;line-height:9.60px;color:#ececec;letter-spacing:-0.193px;">classroom 2</span>
<div class="r" style="left:41.00px;top:637.60px;width:6.00px;height:6.00px;background:#343434;background-image:linear-gradient(90deg,transparent 45%,#1e1e1e 45%,#1e1e1e 55%,transparent 55%),linear-gradient(0deg,transparent 45%,#1e1e1e 45%,#1e1e1e 55%,transparent 55%);"></div>
<div class="r" style="left:127.00px;top:640.90px;width:1.00px;height:1.00px;background:#bbb;"></div>
<span class="t" style="left:131.00px;top:636.30px;font-size:8.00px;line-height:9.60px;color:#ececec;letter-spacing:-0.138px;">Description</span>
<div class="r" style="left:41.00px;top:652.30px;width:6.00px;height:6.00px;background:#343434;background-image:linear-gradient(90deg,transparent 45%,#1e1e1e 45%,#1e1e1e 55%,transparent 55%),linear-gradient(0deg,transparent 45%,#1e1e1e 45%,#1e1e1e 55%,transparent 55%);"></div>
<div class="r" style="left:127.00px;top:655.60px;width:1.00px;height:1.00px;background:#bbb;"></div>
<span class="t" style="left:131.00px;top:651.00px;font-size:8.00px;line-height:9.60px;color:#ececec;letter-spacing:-0.205px;">Images</span>
<svg width="280" height="721" viewBox="0 0 280 721"><path d="M40.5 670.0l1.800 3l4-7.500" stroke="#fff" stroke-width="1.500" fill="none"/></svg>
<div class="r" style="left:127.00px;top:670.30px;width:1.00px;height:1.00px;background:#bbb;"></div>
<span class="t" style="left:131.00px;top:665.70px;font-size:8.00px;line-height:9.60px;color:#ececec;letter-spacing:-0.124px;">Summary / Light scene overall</span>
<svg width="280" height="721" viewBox="0 0 280 721"><path d="M40.5 684.6l1.800 3l4-7.500" stroke="#fff" stroke-width="1.500" fill="none"/></svg>
<div class="r" style="left:127.00px;top:684.90px;width:1.00px;height:1.00px;background:#bbb;"></div>
<span class="t" style="left:131.00px;top:680.30px;font-size:8.00px;line-height:9.60px;color:#ececec;letter-spacing:-0.116px;">Luminaire list</span>
<div class="r" style="left:41.00px;top:698.70px;width:6.00px;height:1.00px;background:#aaa;"></div>
<div class="r" style="left:127.00px;top:699.50px;width:1.00px;height:1.00px;background:#bbb;"></div>
<span class="t" style="left:131.00px;top:694.90px;font-size:8.00px;line-height:9.60px;color:#ececec;letter-spacing:-0.113px;">Calculation objects / Light scene</span>
<div class="r" style="left:34.00px;top:704.00px;width:243.00px;height:2.00px;background:#1e1e1e;"></div>
<div class="r" style="left:0.00px;top:706.00px;width:1280.00px;height:15.00px;background:#111;"></div>
<div class="r" style="left:0.00px;top:705.00px;width:277.00px;height:1.50px;background:#000;"></div>
<span class="t" style="left:5.00px;top:709.30px;font-size:7.00px;line-height:8.40px;color:#8a8a8a;letter-spacing:-0.018px;">DIALux evo</span>
<span class="t" style="left:1176.00px;top:709.00px;font-size:7.50px;line-height:9.00px;color:#dcdcdc;letter-spacing:-0.305px;">0 new messages</span>
<div class="r" style="left:1239.00px;top:709.00px;width:36.00px;height:9.00px;background:#111;border:1px solid #3a3a3a;box-sizing:border-box;"></div>
<svg width="1280" height="721" viewBox="0 0 1280 721"><rect x="1165" y="709.500" width="6.500" height="7.500" fill="#e8e8e8"/><rect x="1166.500" y="709.500" width="3.500" height="2.500" fill="#333"/></svg>
<div class="r" style="left:277.00px;top:684.00px;width:1001.50px;height:22.00px;background:#fff;"></div>
<div class="r" style="left:312.50px;top:686.00px;width:1.00px;height:17.00px;background:#d8d8d8;"></div>
<div class="r" style="left:384.50px;top:686.00px;width:1.00px;height:17.00px;background:#d8d8d8;"></div>
<span class="t" style="left:330.00px;top:691.00px;font-size:8.00px;line-height:9.60px;color:#333;letter-spacing:-0.129px;">Page 1 of 6</span>
<svg width="1280" height="721" viewBox="0 0 1280 721">
<path d="M284 690.500v9" stroke="#3d8fb8" stroke-width="1.600"/><path d="M290 690.500v9l-5-4.500z" fill="#3d8fb8"/>
<path d="M306.500 691v8.500l-4.500-4.250z" fill="#3d8fb8"/>
<path d="M392.500 690.500v9l5-4.500z" fill="#0d4f9a"/>
<path d="M408 690.500v9l5-4.500z" fill="#0d4f9a"/><path d="M414 690.500v9" stroke="#0d4f9a" stroke-width="1.800"/>
<rect x="1066" y="685" width="1" height="19" fill="#ccc"/>
<rect x="1074.500" y="690.500" width="5.500" height="8" fill="none" stroke="#5aa3c4" stroke-width="1.100" rx="1"/>
<path d="M1091 691v8M1098 691v8M1091.500 695h6" stroke="#5aa3c4" stroke-width="1.100"/>
<rect x="1104" y="687.500" width="15" height="15" fill="#2e7f86"/>
<rect x="1108" y="691.500" width="2.600" height="2.600" fill="#fff"/><rect x="1112.600" y="691.500" width="2.600" height="2.600" fill="#fff"/><rect x="1108" y="696" width="2.600" height="2.600" fill="#fff"/><rect x="1112.600" y="696" width="2.600" height="2.600" fill="#fff"/>
<path d="M1161.500 695h5" stroke="#2a7f9a" stroke-width="1.300"/>
<path d="M1173 695h85" stroke="#2a8f9a" stroke-width="1"/><rect x="1192.500" y="690.500" width="2.200" height="9" fill="#2a7f86"/><rect x="1215" y="693" width="1" height="4" fill="#2a8f9a"/>
<path d="M1263.500 695h5M1266 692.500v5" stroke="#2a7f9a" stroke-width="1.300"/>
</svg>
<span class="t" style="left:1133.00px;top:691.30px;font-size:7.50px;line-height:9.00px;color:#222;letter-spacing:-0.337px;font-weight:bold;">58%</span>
<div class="r" style="left:293.00px;top:93.00px;width:481.00px;height:271.00px;background:#fff;border:2px solid #14302a;box-sizing:border-box;"></div>
<div class="r" style="left:783.00px;top:93.50px;width:480.70px;height:271.20px;background:#9a9a9a;"></div>
<div class="r" style="left:783.00px;top:93.50px;width:479.50px;height:270.00px;background:#fff;"></div>
<div class="r" style="left:294.00px;top:373.00px;width:479.70px;height:271.70px;background:#9a9a9a;"></div>
<div class="r" style="left:294.00px;top:373.00px;width:478.50px;height:270.50px;background:#fff;"></div>
<div class="r" style="left:783.00px;top:373.00px;width:480.70px;height:271.70px;background:#9a9a9a;"></div>
<div class="r" style="left:783.00px;top:373.00px;width:479.50px;height:270.50px;background:#fff;"></div>
<div class="r" style="left:294.00px;top:653.00px;width:479.70px;height:32.20px;background:#9a9a9a;"></div>
<div class="r" style="left:294.00px;top:653.00px;width:478.50px;height:31.00px;background:#fff;"></div>
<div class="r" style="left:783.00px;top:653.00px;width:480.70px;height:32.20px;background:#9a9a9a;"></div>
<div class="r" style="left:783.00px;top:653.00px;width:479.50px;height:31.00px;background:#fff;"></div>
<svg width="1280" height="721" viewBox="0 0 1280 721"><g transform="translate(780,90) scale(0.195312)"><defs><linearGradient id="c2" x1="0" x2="1" y1="0" y2="0"><stop offset="0" stop-color="#46433a"/><stop offset=".45" stop-color="#5a5549"/><stop offset="1" stop-color="#47443a"/></linearGradient><linearGradient id="f2" x1="0" x2="1" y1="1" y2="0"><stop offset="0" stop-color="#32312d"/><stop offset=".45" stop-color="#403f3a"/><stop offset="1" stop-color="#4c4a43"/></linearGradient><linearGradient id="w2" x1="0" x2="1" y1="0" y2="0"><stop offset="0" stop-color="#24211c"/><stop offset="1" stop-color="#2c2923"/></linearGradient><linearGradient id="d2" x1="0" x2="1" y1="0" y2="1"><stop offset="0" stop-color="#d9d0b4"/><stop offset=".6" stop-color="#f7e6b8"/><stop offset="1" stop-color="#f2e0b0"/></linearGradient><linearGradient id="t2" x1="0" x2="1" y1="0" y2="0"><stop offset="0" stop-color="#efe6c8"/><stop offset="1" stop-color="#d8cfae"/></linearGradient><filter id="bl2" x="-5%" y="-5%" width="110%" height="110%"><feGaussianBlur stdDeviation="2.2"/></filter><clipPath id="k2"><rect x="15.5" y="18" width="1205" height="1382"/></clipPath></defs><g clip-path="url(#k2)"><g filter="url(#bl2)"><rect x="0" y="0" width="1280" height="620" fill="url(#c2)" /><polygon points="15,535 650,580 1220,478 1220,980 15,900" fill="url(#w2)" /><path d="M15 537L650 582L1220 480" stroke="#6a6555" stroke-width="5" fill="none"/><polygon points="15,655 650,662 1220,648 1220,668 650,676 15,670" fill="#4a463c" /><polygon points="15,716 650,716 1220,716 1220,740 650,736 15,738" fill="#4d493f" /><polygon points="174,548 184,548 186,800 172,800" fill="#595447" /><polygon points="436,566 446,566 448,800 434,800" fill="#595447" /><polygon points="640,580 656,580 662,800 636,800" fill="#67624f" /><polygon points="802,553 814,553 822,830 800,830" fill="#67624f" /><polygon points="908,534 922,534 935,860 905,860" fill="#6c6755" /><polygon points="1048,510 1066,510 1075,920 1045,920" fill="#76705e" /><polygon points="15,841.8 650,788.8 1220,966.8 1220,1400 15,1400" fill="url(#f2)" /><path d="M1040 912.8 L1220 968.8" stroke="#8c866c" stroke-width="6"/><polygon points="15,1011.8 545,938.8 545,1128.8 210,1222.8 15,1254.8" fill="#22211d" opacity=".85"/><polygon points="660,906.8 1130,856.8 1130,966.8 760,1076.8 620,1021.8" fill="#262521" opacity=".8"/><polygon points="15,841.8 650,788.8 900,866.8 600,866.8 520,931.8 15,966.8" fill="#252420" opacity=".8"/><polygon points="15,122 1200,452 1200,468 15,197" fill="#050505" /><polygon points="195,188 645,308 615,335 180,228" fill="#fffdf8" /><polygon points="940,398 1135,445 1110,458 922,410" fill="#fffdf8" /><polygon points="45,160 130,182 125,208 42,186" fill="#2e2d29" /><ellipse cx="85" cy="182" rx="24" ry="11" fill="#c9c5b2" transform="rotate(15 85 182)"/><ellipse cx="88" cy="186" rx="14" ry="6" fill="#5a584e" transform="rotate(15 88 186)"/><ellipse cx="682" cy="341" rx="13" ry="8" fill="#d6cfb0"/><ellipse cx="902" cy="396" rx="11" ry="6" fill="#d6cfb0"/><ellipse cx="1152" cy="462" rx="8" ry="4" fill="#b6b090"/><polygon points="15,375 890,512 880,526 15,408" fill="#080808" /><polygon points="105,396 412,440 405,455 98,412" fill="#fbfaf4" /><polygon points="665,485 835,508 828,520 658,498" fill="#fbfaf4" /><ellipse cx="40" cy="398" rx="16" ry="6" fill="#b8b29a"/><ellipse cx="450" cy="458" rx="10" ry="5" fill="#a8a28a"/><ellipse cx="632" cy="487" rx="9" ry="4" fill="#a8a28a"/><ellipse cx="862" cy="520" rx="8" ry="4" fill="#b8b29a"/><polygon points="15,478 700,550 695,561 15,496" fill="#0a0a0a" /><polygon points="65,484 298,510 295,522 62,496" fill="#f4f3ee" /><polygon points="515,535 660,550 656,558 512,545" fill="#f4f3ee" /><ellipse cx="30" cy="437" rx="12" ry="7" fill="#8a8572"/><ellipse cx="330" cy="520" rx="8" ry="4" fill="#98927a"/><ellipse cx="485" cy="537" rx="8" ry="4" fill="#98927a"/><rect x="20" y="801.8" width="75" height="37" fill="#060606" rx="6"/><rect x="135" y="796.8" width="70" height="35" fill="#060606" rx="6"/><rect x="60" y="826.8" width="80" height="42" fill="#060606" rx="6"/><rect x="195" y="816.8" width="90" height="45" fill="#060606" rx="6"/><rect x="320" y="811.8" width="75" height="35" fill="#060606" rx="6"/><rect x="405" y="781.8" width="50" height="31" fill="#060606" rx="6"/><rect x="480" y="778.8" width="50" height="28" fill="#060606" rx="6"/><rect x="555" y="776.8" width="45" height="28" fill="#060606" rx="6"/><rect x="620" y="774.8" width="45" height="27" fill="#060606" rx="6"/><rect x="668" y="788.8" width="52" height="28" fill="#060606" rx="6"/><rect x="735" y="786.8" width="50" height="28" fill="#060606" rx="6"/><rect x="650" y="831.8" width="95" height="63" fill="#060606" rx="6"/><rect x="755" y="821.8" width="75" height="45" fill="#060606" rx="6"/><rect x="850" y="811.8" width="50" height="40" fill="#060606" rx="6"/><rect x="925" y="804.8" width="50" height="37" fill="#060606" rx="6"/><polygon points="15,836.8 190,824.8 195,836.8 15,849.8" fill="#e6ddbf" /><polygon points="410,808.8 585,801.8 590,813.8 415,821.8" fill="#e6ddbf" /><polygon points="640,801.8 730,794.8 735,802.8 645,810.8" fill="#d8d0b2" /><polygon points="585,828.8 840,811.8 850,824.8 598,844.8" fill="#eae0c0" /><rect x="560" y="816.8" width="10" height="72" fill="#060606" /><rect x="415" y="821.8" width="9" height="55" fill="#060606" /><rect x="585" y="841.8" width="12" height="101" fill="#060606" /><rect x="632" y="841.8" width="13" height="117" fill="#060606" /><rect x="838" y="824.8" width="8" height="32" fill="#060606" /><polygon points="15,876.8 440,844.8 472,856.8 15,902.8" fill="#ebe2c4" /><rect x="60" y="871.8" width="145" height="80" fill="#060606" rx="5"/><rect x="265" y="861.8" width="107" height="63" fill="#060606" rx="5"/><rect x="15" y="902.8" width="45" height="54" fill="#060606" rx="5"/><rect x="430" y="856.8" width="15" height="110" fill="#060606" rx="5"/><rect x="468" y="858.8" width="12" height="43" fill="#060606" rx="5"/><polygon points="680,881.8 1060,836.8 1130,851.8 745,904.8" fill="url(#t2)" /><rect x="675" y="896.8" width="15" height="136" fill="#060606" /><rect x="750" y="902.8" width="18" height="170" fill="#060606" /><rect x="965" y="876.8" width="15" height="136" fill="#060606" /><rect x="1115" y="854.8" width="15" height="114" fill="#060606" /><rect x="880" y="888.8" width="12" height="94" fill="#060606" /><rect x="1030" y="868.8" width="10" height="80" fill="#060606" /><rect x="712" y="902.8" width="10" height="114" fill="#060606" /><polygon points="690,906.8 750,908.8 750,956.8 700,951.8" fill="#060606" /><polygon points="800,896.8 960,881.8 960,916.8 820,931.8" fill="#0b0b0a" /><polygon points="15,956.8 470,906.8 545,931.8 15,1008.8" fill="#efe6c8" /><polygon points="15,1008.8 545,931.8 545,938.8 15,1018.8" fill="#15130f" /><rect x="190" y="991.8" width="36" height="231" fill="#060606" /><rect x="525" y="934.8" width="23" height="198" fill="#060606" /><rect x="465" y="942.8" width="20" height="140" fill="#060606" /><rect x="160" y="1006.8" width="26" height="146" fill="#060606" /><polygon points="60,1014.8 165,1001.8 160,1046.8 70,1051.8" fill="#060606" /><polygon points="262,984.8 405,971.8 412,1001.8 275,1016.8" fill="#060606" /><rect x="330" y="1011.8" width="12" height="73" fill="#060606" /><polygon points="262,1096.8 335,1078.8 400,1088.8 335,1088.8 320,1114.8 330,1084.8" fill="#11110f" /><polygon points="40,1146.8 140,1076.8 150,1084.8 60,1156.8" fill="#11110f" /><rect x="135" y="1046.8" width="13" height="70" fill="#060606" /><polygon points="705,1191.8 1220,1008.8 1220,1406.8 995,1406.8" fill="url(#d2)" /><polygon points="705,1191.8 1220,1008.8 1220,1016.8 712,1200.8" fill="#fff4d0" /><polygon points="708,1208.8 985,1406.8 708,1406.8" fill="#050504" /><polygon points="705,1191.8 712,1200.8 995,1406.8 985,1406.8 705,1206.8" fill="#c9c0a0" /></g></g></g></svg>
<svg width="1280" height="721" viewBox="0 0 1280 721"><g transform="translate(290,370) scale(0.195312)"><defs><linearGradient id="c3k3" x1="0" x2="1" y1="0" y2="1"><stop offset="0" stop-color="#302e27"/><stop offset=".5" stop-color="#3c3931"/><stop offset="1" stop-color="#39362f"/></linearGradient><linearGradient id="w3k3" x1="0" x2="1" y1="0" y2="0"><stop offset="0" stop-color="#4a4842"/><stop offset=".35" stop-color="#4b4943"/><stop offset=".8" stop-color="#58564e"/><stop offset="1" stop-color="#5d5b52"/></linearGradient><linearGradient id="wl3k3" x1="0" x2="1" y1="0" y2="0"><stop offset="0" stop-color="#54524b"/><stop offset="1" stop-color="#403e38"/></linearGradient><linearGradient id="t3k3" x1="0" x2="1" y1="0" y2="0"><stop offset="0" stop-color="#f0e6c4"/><stop offset="1" stop-color="#d6cca8"/></linearGradient><filter id="bl3k3" x="-5%" y="-5%" width="110%" height="110%"><feGaussianBlur stdDeviation="2.2"/></filter><clipPath id="k3"><rect x="22" y="18" width="1250" height="1382"/></clipPath></defs><g clip-path="url(#k3)"><g filter="url(#bl3k3)"><rect x="0" y="0" width="1280" height="900" fill="url(#c3k3)" /><polygon points="22,754.8 450,838.8 450,1236.8 22,1236.8" fill="url(#wl3k3)" /><polygon points="450,838.8 1272,738.8 1272,1416.8 450,1416.8" fill="url(#w3k3)" /><linearGradient id="sh3k3" gradientUnits="userSpaceOnUse" x1="0" y1="746.8" x2="0" y2="946.8"><stop offset="0" stop-color="#33312a" stop-opacity=".95"/><stop offset="1" stop-color="#33312a" stop-opacity="0"/></linearGradient><polygon points="22,754.8 450,838.8 1272,738.8 1272,956.8 22,956.8" fill="url(#sh3k3)" /><linearGradient id="cn3k3" gradientUnits="userSpaceOnUse" x1="380" y1="0" x2="560" y2="0"><stop offset="0" stop-color="#3a3832" stop-opacity="0"/><stop offset=".45" stop-color="#3a3832" stop-opacity=".7"/><stop offset="1" stop-color="#3a3832" stop-opacity="0"/></linearGradient><rect x="380" y="816.8" width="180" height="420" fill="url(#cn3k3)" /><polygon points="22,1186.8 450,1206.8 1272,1316.8 1272,1416.8 22,1416.8" fill="#24231f" /><polygon points="330,18 625,18 855,360 1045,600 1165,736.8 1060,736.8 1040,717 740,400" fill="#060606" /><polygon points="365,18 590,18 848,350 745,392" fill="#fffcf8" /><polygon points="980,625 1050,605 1128,692 1078,712" fill="#fffcf8" /><polygon points="795,420 870,395 895,435 822,462" fill="#1c1b18" /><circle cx="846" cy="432" r="19" fill="#f6f0c8"/><ellipse cx="990" cy="591" rx="20" ry="11" fill="#c8c098"/><rect x="1065" y="711.8" width="90" height="21" fill="#1a1916" /><polygon points="22,470 650,700 790,766.8 770,784.8 560,736.8 22,545" fill="#080808" /><polygon points="22,487 270,578 235,598 22,530" fill="#fffdf6" /><polygon points="560,716.8 740,756.8 730,771.8 545,724.8" fill="#fdfbf4" /><ellipse cx="318" cy="617" rx="15" ry="9" fill="#e0d8b0"/><ellipse cx="540" cy="697" rx="13" ry="7" fill="#c8c098"/><ellipse cx="748" cy="774.8" rx="9" ry="6" fill="#c8c098"/><polygon points="22,680 535,804.8 525,820.8 22,724.8" fill="#0a0a0a" /><polygon points="295,761.8 480,794.8 470,808.8 288,774.8" fill="#f8f6f0" /><ellipse cx="262" cy="761.8" rx="10" ry="7" fill="#d8d0a8"/><ellipse cx="498" cy="813.8" rx="9" ry="6" fill="#d8d0a8"/><ellipse cx="42" cy="718.8" rx="10" ry="6" fill="#c8c098"/><polygon points="22,901.8 222,916.8 205,1071.8 22,1081.8" fill="#1b3327" /><polygon points="478,941.8 560,944.8 560,1216.8 478,1211.8" fill="#2a2924" /><polygon points="488,946.8 556,948.8 556,1216.8 488,1212.8" fill="#050505" /><polygon points="790,926.8 925,921.8 925,1168.8 790,1171.8" fill="#33312c" /><polygon points="800,928.8 916,924.8 916,1168.8 800,1171.8" fill="#050505" /><polygon points="1218,896.8 1272,891.8 1272,1098.8 1245,1091.8" fill="#82807a" /><polygon points="22,1141.8 50,1141.8 50,1181.8 22,1181.8" fill="#050505" /><polygon points="22,1216.8 445,1154.8 445,1276.8 22,1396.8" fill="#050505" /><polygon points="22,1178.8 395,1138.8 445,1148.8 22,1216.8" fill="url(#t3k3)" /><polygon points="650,1216.8 880,1154.8 968,1166.8 770,1238.8" fill="url(#t3k3)" /><polygon points="650,1216.8 770,1238.8 770,1248.8 650,1226.8" fill="#050505" /><rect x="645" y="1221.8" width="15" height="87" fill="#050505" /><rect x="770" y="1241.8" width="20" height="147" fill="#050505" /><rect x="955" y="1171.8" width="11" height="67" fill="#050505" /><polygon points="770,1248.8 960,1178.8 960,1188.8 790,1261.8" fill="#0c0c0a" /><polygon points="920,1186.8 965,1171.8 1010,1156.8 1010,1276.8 990,1356.8 900,1356.8 830,1306.8 900,1276.8" fill="#050505" /><polygon points="1015,1141.8 1055,1136.8 1055,1236.8 1030,1276.8 1010,1276.8" fill="#050505" /><polygon points="60,1398.8 455,1278.8 590,1306.8 380,1398.8" fill="#efe5c0" /><polygon points="380,1398.8 590,1306.8 590,1316.8 500,1398.8" fill="#050505" /><polygon points="560,1398.8 600,1316.8 695,1281.8 680,1398.8" fill="#050505" /><polygon points="1070,1336.8 1210,1184.8 1272,1186.8 1272,1378.8" fill="#f0e6c4" /><polygon points="1070,1336.8 1272,1378.8 1272,1406.8 1075,1406.8" fill="#050505" /></g></g></g></svg>
<svg width="1280" height="721" viewBox="0 0 1280 721"><g transform="translate(290,650) scale(0.195312)"><defs><linearGradient id="c3k5" x1="0" x2="1" y1="0" y2="1"><stop offset="0" stop-color="#302e27"/><stop offset=".5" stop-color="#3c3931"/><stop offset="1" stop-color="#39362f"/></linearGradient><linearGradient id="w3k5" x1="0" x2="1" y1="0" y2="0"><stop offset="0" stop-color="#4a4842"/><stop offset=".35" stop-color="#4b4943"/><stop offset=".8" stop-color="#58564e"/><stop offset="1" stop-color="#5d5b52"/></linearGradient><linearGradient id="wl3k5" x1="0" x2="1" y1="0" y2="0"><stop offset="0" stop-color="#54524b"/><stop offset="1" stop-color="#403e38"/></linearGradient><linearGradient id="t3k5" x1="0" x2="1" y1="0" y2="0"><stop offset="0" stop-color="#f0e6c4"/><stop offset="1" stop-color="#d6cca8"/></linearGradient><filter id="bl3k5" x="-5%" y="-5%" width="110%" height="110%"><feGaussianBlur stdDeviation="2.2"/></filter><clipPath id="k5"><rect x="22" y="18" width="1250" height="157"/></clipPath></defs><g clip-path="url(#k5)"><g filter="url(#bl3k5)"><rect x="0" y="0" width="1280" height="900" fill="url(#c3k5)" /><polygon points="22,754.8 450,838.8 450,1236.8 22,1236.8" fill="url(#wl3k5)" /><polygon points="450,838.8 1272,738.8 1272,1416.8 450,1416.8" fill="url(#w3k5)" /><linearGradient id="sh3k5" gradientUnits="userSpaceOnUse" x1="0" y1="746.8" x2="0" y2="946.8"><stop offset="0" stop-color="#33312a" stop-opacity=".95"/><stop offset="1" stop-color="#33312a" stop-opacity="0"/></linearGradient><polygon points="22,754.8 450,838.8 1272,738.8 1272,956.8 22,956.8" fill="url(#sh3k5)" /><linearGradient id="cn3k5" gradientUnits="userSpaceOnUse" x1="380" y1="0" x2="560" y2="0"><stop offset="0" stop-color="#3a3832" stop-opacity="0"/><stop offset=".45" stop-color="#3a3832" stop-opacity=".7"/><stop offset="1" stop-color="#3a3832" stop-opacity="0"/></linearGradient><rect x="380" y="816.8" width="180" height="420" fill="url(#cn3k5)" /><polygon points="22,1186.8 450,1206.8 1272,1316.8 1272,1416.8 22,1416.8" fill="#24231f" /><polygon points="330,18 625,18 855,360 1045,600 1165,736.8 1060,736.8 1040,717 740,400" fill="#060606" /><polygon points="365,18 590,18 848,350 745,392" fill="#fffcf8" /><polygon points="980,625 1050,605 1128,692 1078,712" fill="#fffcf8" /><polygon points="795,420 870,395 895,435 822,462" fill="#1c1b18" /><circle cx="846" cy="432" r="19" fill="#f6f0c8"/><ellipse cx="990" cy="591" rx="20" ry="11" fill="#c8c098"/><rect x="1065" y="711.8" width="90" height="21" fill="#1a1916" /><polygon points="22,470 650,700 790,766.8 770,784.8 560,736.8 22,545" fill="#080808" /><polygon points="22,487 270,578 235,598 22,530" fill="#fffdf6" /><polygon points="560,716.8 740,756.8 730,771.8 545,724.8" fill="#fdfbf4" /><ellipse cx="318" cy="617" rx="15" ry="9" fill="#e0d8b0"/><ellipse cx="540" cy="697" rx="13" ry="7" fill="#c8c098"/><ellipse cx="748" cy="774.8" rx="9" ry="6" fill="#c8c098"/><polygon points="22,680 535,804.8 525,820.8 22,724.8" fill="#0a0a0a" /><polygon points="295,761.8 480,794.8 470,808.8 288,774.8" fill="#f8f6f0" /><ellipse cx="262" cy="761.8" rx="10" ry="7" fill="#d8d0a8"/><ellipse cx="498" cy="813.8" rx="9" ry="6" fill="#d8d0a8"/><ellipse cx="42" cy="718.8" rx="10" ry="6" fill="#c8c098"/><polygon points="22,901.8 222,916.8 205,1071.8 22,1081.8" fill="#1b3327" /><polygon points="478,941.8 560,944.8 560,1216.8 478,1211.8" fill="#2a2924" /><polygon points="488,946.8 556,948.8 556,1216.8 488,1212.8" fill="#050505" /><polygon points="790,926.8 925,921.8 925,1168.8 790,1171.8" fill="#33312c" /><polygon points="800,928.8 916,924.8 916,1168.8 800,1171.8" fill="#050505" /><polygon points="1218,896.8 1272,891.8 1272,1098.8 1245,1091.8" fill="#82807a" /><polygon points="22,1141.8 50,1141.8 50,1181.8 22,1181.8" fill="#050505" /><polygon points="22,1216.8 445,1154.8 445,1276.8 22,1396.8" fill="#050505" /><polygon points="22,1178.8 395,1138.8 445,1148.8 22,1216.8" fill="url(#t3k5)" /><polygon points="650,1216.8 880,1154.8 968,1166.8 770,1238.8" fill="url(#t3k5)" /><polygon points="650,1216.8 770,1238.8 770,1248.8 650,1226.8" fill="#050505" /><rect x="645" y="1221.8" width="15" height="87" fill="#050505" /><rect x="770" y="1241.8" width="20" height="147" fill="#050505" /><rect x="955" y="1171.8" width="11" height="67" fill="#050505" /><polygon points="770,1248.8 960,1178.8 960,1188.8 790,1261.8" fill="#0c0c0a" /><polygon points="920,1186.8 965,1171.8 1010,1156.8 1010,1276.8 990,1356.8 900,1356.8 830,1306.8 900,1276.8" fill="#050505" /><polygon points="1015,1141.8 1055,1136.8 1055,1236.8 1030,1276.8 1010,1276.8" fill="#050505" /><polygon points="60,1398.8 455,1278.8 590,1306.8 380,1398.8" fill="#efe5c0" /><polygon points="380,1398.8 590,1306.8 590,1316.8 500,1398.8" fill="#050505" /><polygon points="560,1398.8 600,1316.8 695,1281.8 680,1398.8" fill="#050505" /><polygon points="1070,1336.8 1210,1184.8 1272,1186.8 1272,1378.8" fill="#f0e6c4" /><polygon points="1070,1336.8 1272,1378.8 1272,1406.8 1075,1406.8" fill="#050505" /></g></g></g></svg>
<svg width="1280" height="721" viewBox="0 0 1280 721"><g transform="translate(780,370) scale(0.195312)"><defs><linearGradient id="c4" x1="0" x2="1" y1="0" y2="1"><stop offset="0" stop-color="#33312a"/><stop offset=".5" stop-color="#353329"/><stop offset="1" stop-color="#403e35"/></linearGradient><linearGradient id="w4" x1="0" x2="1" y1="0" y2="0"><stop offset="0" stop-color="#34322d"/><stop offset=".3" stop-color="#504e47"/><stop offset=".65" stop-color="#66645b"/><stop offset="1" stop-color="#58564e"/></linearGradient><radialGradient id="wb4" cx=".45" cy=".5" r=".6"><stop offset="0" stop-color="#87857b"/><stop offset="1" stop-color="#6e6c63"/></radialGradient><linearGradient id="t4" x1="0" x2="1" y1="0" y2="0"><stop offset="0" stop-color="#f0e6c6"/><stop offset="1" stop-color="#d4caa8"/></linearGradient><filter id="b4" x="-10%" y="-10%" width="120%" height="120%"><feGaussianBlur stdDeviation="7"/></filter><filter id="b4b" x="-20%" y="-20%" width="140%" height="140%"><feGaussianBlur stdDeviation="40"/></filter><filter id="bl4" x="-5%" y="-5%" width="110%" height="110%"><feGaussianBlur stdDeviation="2.2"/></filter><clipPath id="k4"><rect x="15.5" y="18" width="1255" height="1382"/></clipPath></defs><g clip-path="url(#k4)"><g filter="url(#bl4)"><rect x="0" y="0" width="1280" height="900" fill="url(#c4)" /><polygon points="-40,852 1330,548 1330,1460 -40,1460" fill="url(#w4)" filter="url(#b4)"/><radialGradient id="vg4" gradientUnits="userSpaceOnUse" cx="760" cy="946.8" r="720"><stop offset=".2" stop-color="#2a2823" stop-opacity="0"/><stop offset=".6" stop-color="#2a2823" stop-opacity=".25"/><stop offset="1" stop-color="#2a2823" stop-opacity=".6"/></radialGradient><polygon points="-40,852 1330,548 1330,1460 -40,1460" fill="url(#vg4)" filter="url(#b4)"/><polygon points="600,-30 1330,-30 1330,320" fill="#2c2a24" opacity=".8" filter="url(#b4b)"/><polygon points="185,18 490,18 982,520 872,562" fill="#050505" /><polygon points="470,52 895,465 810,497 370,142" fill="#fffaf6" /><polygon points="255,18 330,18 345,35 300,62" fill="#1f1e1b" /><polygon points="845,515 915,492 940,520 872,545" fill="#26251f" /><ellipse cx="890" cy="520" rx="20" ry="10" fill="#e8e2c6"/><polygon points="705,560 760,545 782,570 728,588" fill="#77736a" /><ellipse cx="742" cy="568" rx="15" ry="8" fill="#cfcab4"/><polygon points="525,620 575,608 595,630 545,645" fill="#6a665d" /><ellipse cx="560" cy="627" rx="13" ry="7" fill="#c4bfa8"/><polygon points="15,503 492,675 440,700 15,574" fill="#070707" /><polygon points="15,702.8 228,752.8 212,768.8 15,740.8" fill="#080808" /><polygon points="15,520 385,640 355,662 15,566" fill="#fffdf8" /><ellipse cx="422" cy="676" rx="17" ry="8" fill="#d8d2b4"/><polygon points="15,720.8 125,738.8 118,749.8 15,732.8" fill="#f6f4ee" /><ellipse cx="168" cy="754.8" rx="10" ry="5" fill="#b8b298"/><polygon points="15,794.8 62,804.8 55,816.8 15,811.8" fill="#0c0c0b" /><polygon points="50,951.8 140,946.8 100,1216.8 30,1221.8" fill="#0d0d0c" /><polygon points="300,931.8 392,926.8 382,1186.8 280,1192.8" fill="#0b0b0a" /><polygon points="385,921.8 402,919.8 392,1186.8 380,1186.8" fill="#55534a" /><polygon points="1020,1141.8 1140,1146.8 1140,1208.8 1040,1196.8" fill="#403e38" opacity=".6"/><polygon points="632,881.8 1085,841.8 1122,1144.8 635,1121.8" fill="url(#wb4)" /><polygon points="635,1114.8 1122,1136.8 1122,1148.8 1020,1150.8 635,1126.8" fill="#a8a69c" /><polygon points="15,1231.8 310,1196.8 315,1216.8 15,1261.8" fill="#e9dfc0" /><polygon points="15,1236.8 50,1231.8 50,1356.8 15,1361.8" fill="#060606" /><polygon points="130,1211.8 255,1201.8 240,1306.8 110,1328.8" fill="#060606" /><polygon points="300,1186.8 410,1181.8 390,1276.8 290,1292.8" fill="#060606" /><polygon points="50,1276.8 110,1316.8 105,1328.8 50,1296.8" fill="#6a675c" /><polygon points="240,1261.8 290,1276.8 290,1291.8 240,1276.8" fill="#55534a" /><polygon points="15,1316.8 480,1276.8 760,1398.8 15,1398.8" fill="#191815" /><polygon points="15,1371.8 545,1241.8 655,1261.8 200,1400.8 15,1400.8" fill="url(#t4)" /><polygon points="200,1400.8 655,1261.8 655,1271.8 380,1366.8 380,1400.8" fill="#0b0b0a" /><polygon points="470,1306.8 600,1281.8 585,1400.8 455,1400.8" fill="#060606" /><polygon points="640,1256.8 748,1234.8 735,1400.8 625,1400.8" fill="#060606" /><polygon points="585,1356.8 630,1371.8 628,1384.8 585,1368.8" fill="#77746a" /><polygon points="870,1400.8 990,1321.8 1220,1366.8 1215,1400.8" fill="#ece2c2" /><polygon points="1195,1366.8 1222,1366.8 1220,1400.8 1200,1400.8" fill="#0c0c0a" /></g></g></g></svg>
<svg width="1280" height="721" viewBox="0 0 1280 721"><defs><clipPath id="k6"><rect x="783" y="653" width="245.5" height="31"/></clipPath></defs><g clip-path="url(#k6)"><rect x="783" y="653" width="246" height="37" fill="#36342c" /><polygon points="881,653 931,653 941,690 900,690" fill="#050505" /><polygon points="886,653 925,653 935,690 904.5,690" fill="#fbf6f2" /><polygon points="860,680 868,678 870,690 860,690" fill="#1a1916" /></g></svg>
<svg width="1280" height="721" viewBox="0 0 1280 721"><g transform="translate(295,140) scale(0.235849)"><path d="M82 38L912 38" stroke="#b0b0b0" stroke-width="3.5" fill="none"/><path d="M82 62L912 62" stroke="#b0b0b0" stroke-width="4" fill="none"/><path d="M290 38L290 62" stroke="#b0b0b0" stroke-width="3" fill="none"/><path d="M500 38L500 62" stroke="#b0b0b0" stroke-width="3" fill="none"/><path d="M705 38L705 62" stroke="#b0b0b0" stroke-width="3" fill="none"/><path d="M808 38L808 62" stroke="#b0b0b0" stroke-width="3" fill="none"/><path d="M928 32L928 685" stroke="#b0b0b0" stroke-width="4" fill="none"/><path d="M930 38L995 38" stroke="#b0b0b0" stroke-width="3.5" fill="none"/><path d="M930 62L995 62" stroke="#b0b0b0" stroke-width="3.5" fill="none"/><path d="M50 62L50 699" stroke="#d8d8d8" stroke-width="3" fill="none"/><path d="M50 270L80 270" stroke="#b0b0b0" stroke-width="3" fill="none"/><path d="M50 475L80 475" stroke="#b0b0b0" stroke-width="3" fill="none"/><path d="M50 699L543 699" stroke="#b0b0b0" stroke-width="3.5" fill="none"/><path d="M633 699L799 699" stroke="#b0b0b0" stroke-width="3.5" fill="none"/><path d="M886 699L992 699" stroke="#b0b0b0" stroke-width="3.5" fill="none"/><path d="M78 743L509 743" stroke="#b0b0b0" stroke-width="3.5" fill="none"/><path d="M509 699L509 743" stroke="#b0b0b0" stroke-width="3.5" fill="none"/><path d="M50 699L50 767" stroke="#b0b0b0" stroke-width="3.5" fill="none"/><path d="M78 699L78 767" stroke="#b0b0b0" stroke-width="3.5" fill="none"/><path d="M646 699L646 767" stroke="#b0b0b0" stroke-width="3.5" fill="none"/><path d="M714 699L714 767" stroke="#b0b0b0" stroke-width="3.5" fill="none"/><path d="M80 62L80 684" stroke="#bfa567" stroke-width="4" fill="none"/><path d="M160 683L912 683" stroke="#f0b030" stroke-width="4.5" fill="none"/><path d="M610 62L610 683" stroke="#f8dc9a" stroke-width="2" fill="none"/><path d="M912 62L912 683" stroke="#f8e2b0" stroke-width="1.5" fill="none"/><rect x="692" y="150" width="158" height="412" fill="none" stroke="#f8d27a" stroke-width="3"/><path d="M692 150L850 150" stroke="#f6c453" stroke-width="7" fill="none"/><path d="M850 150L850 562" stroke="#f6c453" stroke-width="4" fill="none"/><path d="M692 562L850 562" stroke="#f6c453" stroke-width="4" fill="none"/><rect x="470" y="393" width="110" height="16" fill="#f6c453" /><path d="M567 98H510V355H567" stroke="#d8a838" stroke-width="4.500" fill="none"/><path d="M567 98L567 355" stroke="#555" stroke-width="2" fill="none"/><path d="M567 447H510V655H567" stroke="#d8a838" stroke-width="4.500" fill="none"/><path d="M567 447L567 655" stroke="#555" stroke-width="2" fill="none"/><rect x="893" y="150" width="17" height="422" fill="#e6e6e6" /><path d="M905 230L905 480" stroke="#9a9a9a" stroke-width="3" fill="none"/><rect x="898" y="455" width="10" height="25" fill="#444" /><rect x="730" y="160" width="76" height="362" rx="8" fill="none" stroke="#5a5a5a" stroke-width="4"/><rect x="741" y="196" width="54" height="314" fill="none" stroke="#333" stroke-width="3.500"/><path d="M748 200L748 505" stroke="#999" stroke-width="2" fill="none"/><rect x="740" y="520" width="56" height="30" rx="6" fill="none" stroke="#aaa" stroke-width="2"/><path d="M255 98H205V355H255" stroke="#333" stroke-width="3.500" fill="none"/><path d="M255 447H205V655H255" stroke="#333" stroke-width="3.500" fill="none"/><path d="M220 98L220 660" stroke="#444" stroke-width="2.5" fill="none"/><path d="M205 230L255 230" stroke="#333" stroke-width="2.5" fill="none"/><path d="M360 98H412V300H360" stroke="#333" stroke-width="3.500" fill="none"/><path d="M360 395H412V652H360" stroke="#333" stroke-width="3.500" fill="none"/><path d="M398 98L398 600" stroke="#555" stroke-width="2.5" fill="none"/><path d="M428 120L428 600" stroke="#555" stroke-width="2.5" fill="none"/><path d="M360 200L412 200" stroke="#333" stroke-width="2.5" fill="none"/><path d="M360 525L412 525" stroke="#333" stroke-width="2.5" fill="none"/><path d="M360 397L412 397" stroke="#222" stroke-width="4" fill="none"/><path d="M520 230L567 230" stroke="#333" stroke-width="2.5" fill="none"/><path d="M520 548L567 548" stroke="#333" stroke-width="2.5" fill="none"/><path d="M580 110L580 600" stroke="#777" stroke-width="2.5" fill="none"/><path d="M608 110L608 600" stroke="#777" stroke-width="2.5" fill="none"/><path d="M758 120L758 600" stroke="#666" stroke-width="2.5" fill="none"/><path d="M788 120L788 600" stroke="#666" stroke-width="2.5" fill="none"/><rect x="221" y="158" width="28" height="127" fill="#dcdcff" stroke="#2828e8" stroke-width="4"/><path d="M235 168V275" stroke="#6a6af0" stroke-width="5" stroke-dasharray="5 4"/><rect x="221" y="445" width="28" height="110" fill="#dcdcff" stroke="#2828e8" stroke-width="4"/><path d="M235 455V545" stroke="#6a6af0" stroke-width="5" stroke-dasharray="5 4"/><circle cx="235" cy="130" r="11" fill="#1010f0"/><circle cx="235" cy="310" r="11" fill="#1010f0"/><circle cx="235" cy="412" r="11" fill="#1010f0"/><circle cx="235" cy="580" r="11" fill="#1010f0"/><rect x="399" y="158" width="28" height="127" fill="#dcdcff" stroke="#2828e8" stroke-width="4"/><path d="M413 168V275" stroke="#6a6af0" stroke-width="5" stroke-dasharray="5 4"/><rect x="399" y="430" width="28" height="130" fill="#dcdcff" stroke="#2828e8" stroke-width="4"/><path d="M413 440V550" stroke="#6a6af0" stroke-width="5" stroke-dasharray="5 4"/><circle cx="413" cy="130" r="11" fill="#1010f0"/><circle cx="413" cy="310" r="11" fill="#1010f0"/><circle cx="413" cy="412" r="11" fill="#1010f0"/><circle cx="413" cy="580" r="11" fill="#1010f0"/><rect x="579" y="158" width="28" height="127" fill="#dcdcff" stroke="#2828e8" stroke-width="4"/><path d="M593 168V275" stroke="#6a6af0" stroke-width="5" stroke-dasharray="5 4"/><rect x="579" y="430" width="28" height="135" fill="#dcdcff" stroke="#2828e8" stroke-width="4"/><path d="M593 440V555" stroke="#6a6af0" stroke-width="5" stroke-dasharray="5 4"/><circle cx="593" cy="130" r="11" fill="#1010f0"/><circle cx="593" cy="310" r="11" fill="#1010f0"/><circle cx="593" cy="412" r="11" fill="#1010f0"/><circle cx="593" cy="580" r="11" fill="#1010f0"/><rect x="759" y="158" width="28" height="127" fill="#dcdcff" stroke="#2828e8" stroke-width="4"/><path d="M773 168V275" stroke="#6a6af0" stroke-width="5" stroke-dasharray="5 4"/><rect x="759" y="430" width="28" height="125" fill="#dcdcff" stroke="#2828e8" stroke-width="4"/><path d="M773 440V545" stroke="#6a6af0" stroke-width="5" stroke-dasharray="5 4"/><circle cx="773" cy="130" r="11" fill="#1010f0"/><circle cx="773" cy="310" r="11" fill="#1010f0"/><circle cx="773" cy="412" r="11" fill="#1010f0"/><circle cx="773" cy="580" r="11" fill="#1010f0"/><rect x="268" y="570" width="21" height="21" fill="#1010f0" /><rect x="338" y="570" width="21" height="21" fill="#1010f0" /><path d="M801 225L801 485" stroke="#2020f0" stroke-width="7" fill="none"/><rect x="163" y="109" width="20" height="42" fill="#0a0a0a" rx="3"/><polygon points="181,126 202,108 211,116 193,130 211,144 202,152 181,134" fill="#111" /><rect x="183" y="118" width="14" height="24" fill="#3a3a3a" /><rect x="160" y="115" width="3" height="30" fill="#777" /><rect x="163" y="169" width="20" height="42" fill="#0a0a0a" rx="3"/><rect x="181" y="169" width="26" height="12" fill="#111" /><rect x="181" y="185" width="24" height="10" fill="#111" /><rect x="181" y="199" width="28" height="12" fill="#111" /><rect x="183" y="178" width="14" height="24" fill="#3a3a3a" /><rect x="160" y="175" width="3" height="30" fill="#777" /><rect x="163" y="234" width="20" height="42" fill="#0a0a0a" rx="3"/><polygon points="181,251 202,233 211,241 193,255 211,269 202,277 181,259" fill="#111" /><rect x="183" y="243" width="14" height="24" fill="#3a3a3a" /><rect x="160" y="240" width="3" height="30" fill="#777" /><rect x="163" y="297" width="20" height="42" fill="#0a0a0a" rx="3"/><rect x="181" y="297" width="26" height="12" fill="#111" /><rect x="181" y="313" width="24" height="10" fill="#111" /><rect x="181" y="327" width="28" height="12" fill="#111" /><rect x="183" y="306" width="14" height="24" fill="#3a3a3a" /><rect x="160" y="303" width="3" height="30" fill="#777" /><rect x="163" y="469" width="20" height="42" fill="#0a0a0a" rx="3"/><rect x="181" y="469" width="26" height="12" fill="#111" /><rect x="181" y="485" width="24" height="10" fill="#111" /><rect x="181" y="499" width="28" height="12" fill="#111" /><rect x="183" y="478" width="14" height="24" fill="#3a3a3a" /><rect x="160" y="475" width="3" height="30" fill="#777" /><rect x="163" y="532" width="20" height="42" fill="#0a0a0a" rx="3"/><polygon points="181,549 202,531 211,539 193,553 211,567 202,575 181,557" fill="#111" /><rect x="183" y="541" width="14" height="24" fill="#3a3a3a" /><rect x="160" y="538" width="3" height="30" fill="#777" /><rect x="163" y="599" width="20" height="42" fill="#0a0a0a" rx="3"/><rect x="181" y="599" width="26" height="12" fill="#111" /><rect x="181" y="615" width="24" height="10" fill="#111" /><rect x="181" y="629" width="28" height="12" fill="#111" /><rect x="183" y="608" width="14" height="24" fill="#3a3a3a" /><rect x="160" y="605" width="3" height="30" fill="#777" /><rect x="318" y="109" width="20" height="42" fill="#0a0a0a" rx="3"/><polygon points="336,126 357,108 366,116 348,130 366,144 357,152 336,134" fill="#111" /><rect x="338" y="118" width="14" height="24" fill="#3a3a3a" /><rect x="315" y="115" width="3" height="30" fill="#777" /><rect x="318" y="169" width="20" height="42" fill="#0a0a0a" rx="3"/><rect x="336" y="169" width="26" height="12" fill="#111" /><rect x="336" y="185" width="24" height="10" fill="#111" /><rect x="336" y="199" width="28" height="12" fill="#111" /><rect x="338" y="178" width="14" height="24" fill="#3a3a3a" /><rect x="315" y="175" width="3" height="30" fill="#777" /><rect x="318" y="234" width="20" height="42" fill="#0a0a0a" rx="3"/><polygon points="336,251 357,233 366,241 348,255 366,269 357,277 336,259" fill="#111" /><rect x="338" y="243" width="14" height="24" fill="#3a3a3a" /><rect x="315" y="240" width="3" height="30" fill="#777" /><rect x="318" y="407" width="20" height="42" fill="#0a0a0a" rx="3"/><polygon points="336,424 357,406 366,414 348,428 366,442 357,450 336,432" fill="#111" /><rect x="338" y="416" width="14" height="24" fill="#3a3a3a" /><rect x="315" y="413" width="3" height="30" fill="#777" /><rect x="318" y="469" width="20" height="42" fill="#0a0a0a" rx="3"/><rect x="336" y="469" width="26" height="12" fill="#111" /><rect x="336" y="485" width="24" height="10" fill="#111" /><rect x="336" y="499" width="28" height="12" fill="#111" /><rect x="338" y="478" width="14" height="24" fill="#3a3a3a" /><rect x="315" y="475" width="3" height="30" fill="#777" /><rect x="318" y="532" width="20" height="42" fill="#0a0a0a" rx="3"/><polygon points="336,549 357,531 366,539 348,553 366,567 357,575 336,557" fill="#111" /><rect x="338" y="541" width="14" height="24" fill="#3a3a3a" /><rect x="315" y="538" width="3" height="30" fill="#777" /><rect x="318" y="594" width="20" height="42" fill="#0a0a0a" rx="3"/><polygon points="336,611 357,593 366,601 348,615 366,629 357,637 336,619" fill="#111" /><rect x="338" y="603" width="14" height="24" fill="#3a3a3a" /><rect x="315" y="600" width="3" height="30" fill="#777" /><rect x="474" y="109" width="20" height="42" fill="#0a0a0a" rx="3"/><polygon points="492,126 513,108 522,116 504,130 522,144 513,152 492,134" fill="#111" /><rect x="494" y="118" width="14" height="24" fill="#3a3a3a" /><rect x="471" y="115" width="3" height="30" fill="#777" /><rect x="474" y="169" width="20" height="42" fill="#0a0a0a" rx="3"/><rect x="492" y="169" width="26" height="12" fill="#111" /><rect x="492" y="185" width="24" height="10" fill="#111" /><rect x="492" y="199" width="28" height="12" fill="#111" /><rect x="494" y="178" width="14" height="24" fill="#3a3a3a" /><rect x="471" y="175" width="3" height="30" fill="#777" /><rect x="474" y="234" width="20" height="42" fill="#0a0a0a" rx="3"/><polygon points="492,251 513,233 522,241 504,255 522,269 513,277 492,259" fill="#111" /><rect x="494" y="243" width="14" height="24" fill="#3a3a3a" /><rect x="471" y="240" width="3" height="30" fill="#777" /><rect x="474" y="297" width="20" height="42" fill="#0a0a0a" rx="3"/><rect x="492" y="297" width="26" height="12" fill="#111" /><rect x="492" y="313" width="24" height="10" fill="#111" /><rect x="492" y="327" width="28" height="12" fill="#111" /><rect x="494" y="306" width="14" height="24" fill="#3a3a3a" /><rect x="471" y="303" width="3" height="30" fill="#777" /><rect x="474" y="469" width="20" height="42" fill="#0a0a0a" rx="3"/><rect x="492" y="469" width="26" height="12" fill="#111" /><rect x="492" y="485" width="24" height="10" fill="#111" /><rect x="492" y="499" width="28" height="12" fill="#111" /><rect x="494" y="478" width="14" height="24" fill="#3a3a3a" /><rect x="471" y="475" width="3" height="30" fill="#777" /><rect x="474" y="532" width="20" height="42" fill="#0a0a0a" rx="3"/><polygon points="492,549 513,531 522,539 504,553 522,567 513,575 492,557" fill="#111" /><rect x="494" y="541" width="14" height="24" fill="#3a3a3a" /><rect x="471" y="538" width="3" height="30" fill="#777" /><rect x="474" y="599" width="20" height="42" fill="#0a0a0a" rx="3"/><rect x="492" y="599" width="26" height="12" fill="#111" /><rect x="492" y="615" width="24" height="10" fill="#111" /><rect x="492" y="629" width="28" height="12" fill="#111" /><rect x="494" y="608" width="14" height="24" fill="#3a3a3a" /><rect x="471" y="605" width="3" height="30" fill="#777" /><path d="M512 100L512 353" stroke="#e8b848" stroke-width="2.5" fill="none"/><path d="M512 449L512 653" stroke="#e8b848" stroke-width="2.5" fill="none"/><g stroke="#2a2a2a" stroke-width="4" fill="none"><path d="M822 115L880 85M845 160L900 135M850 95L875 150M870 88L895 140"/></g><g fill="#555"><rect x="808" y="338" width="32" height="30" rx="4"/><rect x="798" y="346" width="12" height="14"/></g><rect x="815" y="345" width="16" height="14" fill="#ddd"/><path d="M85 608V682H160" stroke="#0a0a0a" stroke-width="6" fill="none"/><path d="M78 615L85 598L92 615z" fill="#0a0a0a"/><path d="M150 675L165 682L150 689z" fill="#0a0a0a"/><rect x="225" y="670" width="25" height="8" fill="#444" /><path d="M250 676L400 676" stroke="#8a8a8a" stroke-width="2" fill="none"/></g></svg>
<span class="t" style="left:559.00px;top:136.00px;font-size:10.50px;line-height:12.60px;color:#161616;letter-spacing:-0.908px;font-weight:bold;">Summary</span>
<span class="t" style="left:559.50px;top:166.20px;font-size:5.00px;line-height:6.00px;color:#2a2a2a;letter-spacing:-0.111px;font-weight:bold;">Visual task areas</span>
<span class="t" style="left:614.00px;top:165.56px;font-size:5.40px;line-height:6.48px;color:#555;">Ē</span>
<span class="t" style="left:618.30px;top:168.68px;font-size:3.20px;line-height:3.84px;color:#888;letter-spacing:-0.208px;">Task area</span>
<span class="t" style="left:668.50px;top:166.20px;font-size:5.00px;line-height:6.00px;color:#555;letter-spacing:0.025px;">2128 lx</span>
<span class="t" style="left:722.70px;top:166.20px;font-size:5.00px;line-height:6.00px;color:#555;letter-spacing:-0.047px;">471</span>
<div class="r" style="left:558.70px;top:177.10px;width:182.60px;height:1.60px;background:#4a4a4a;"></div>
<span class="t" style="left:559.50px;top:182.50px;font-size:5.00px;line-height:6.00px;color:#2a2a2a;letter-spacing:-0.081px;font-weight:bold;">Glare valuation</span>
<span class="t" style="left:614.00px;top:182.30px;font-size:5.00px;line-height:6.00px;color:#555;">R</span>
<span class="t" style="left:617.60px;top:185.08px;font-size:3.20px;line-height:3.84px;color:#888;letter-spacing:-0.089px;">UG, max</span>
<span class="t" style="left:668.50px;top:182.50px;font-size:5.00px;line-height:6.00px;color:#555;letter-spacing:-0.180px;">16</span>
<div class="r" style="left:558.70px;top:192.90px;width:182.60px;height:1.60px;background:#4a4a6a;"></div>
<span class="t" style="left:559.50px;top:198.60px;font-size:5.00px;line-height:6.00px;color:#2a2a2a;letter-spacing:-0.107px;font-weight:bold;">Energy consumption</span>
<span class="t" style="left:614.00px;top:198.60px;font-size:5.00px;line-height:6.00px;color:#555;letter-spacing:0.116px;">Room</span>
<span class="t" style="left:668.50px;top:198.60px;font-size:5.00px;line-height:6.00px;color:#555;letter-spacing:0.023px;">0 kWh/a</span>
<div class="r" style="left:558.70px;top:209.20px;width:182.60px;height:1.60px;background:#4a4a4a;"></div>
<span class="t" style="left:559.50px;top:214.40px;font-size:5.00px;line-height:6.00px;color:#2a2a2a;letter-spacing:-0.191px;font-weight:bold;">Room</span>
<span class="t" style="left:614.00px;top:214.40px;font-size:5.00px;line-height:6.00px;color:#555;letter-spacing:0.084px;">Lighting power density</span>
<span class="t" style="left:668.50px;top:214.40px;font-size:5.00px;line-height:6.00px;color:#555;letter-spacing:0.016px;">20.07 W/m²</span>
<div class="r" style="left:558.70px;top:225.00px;width:182.60px;height:1.60px;background:#4a4a4a;"></div>
<div class="r" style="left:549.50px;top:172.60px;width:204.00px;height:25.60px;border:4.60px solid #72cf00;box-sizing:border-box;"></div>
<span class="t" style="left:559.50px;top:344.16px;font-size:3.90px;line-height:4.68px;color:#8a8a8a;letter-spacing:0.007px;">Site · school · ground floor · classroom 2</span>
<span class="t" style="left:1047.50px;top:136.00px;font-size:10.50px;line-height:12.60px;color:#161616;letter-spacing:-0.908px;font-weight:bold;">Summary</span>
<span class="t" style="left:1048.00px;top:166.20px;font-size:5.00px;line-height:6.00px;color:#2a2a2a;letter-spacing:-0.012px;font-weight:bold;">Ground area</span>
<span class="t" style="left:1106.00px;top:166.20px;font-size:5.00px;line-height:6.00px;color:#555;letter-spacing:0.021px;">70.05 m²</span>
<div class="r" style="left:1047.00px;top:176.50px;width:175.30px;height:1.60px;background:#4a4a4a;"></div>
<span class="t" style="left:1048.00px;top:182.00px;font-size:5.00px;line-height:6.00px;color:#2a2a2a;letter-spacing:-0.079px;font-weight:bold;">Reflection factors</span>
<span class="t" style="left:1106.00px;top:182.00px;font-size:5.00px;line-height:6.00px;color:#555;letter-spacing:-0.114px;">Ceiling: 70.0 %,</span>
<span class="t" style="left:1106.00px;top:188.70px;font-size:5.00px;line-height:6.00px;color:#555;letter-spacing:-0.126px;">Walls: 68.0 %,</span>
<span class="t" style="left:1106.00px;top:195.40px;font-size:5.00px;line-height:6.00px;color:#555;letter-spacing:-0.103px;">Floor: 20.0 %</span>
<div class="r" style="left:1047.00px;top:205.50px;width:175.30px;height:1.60px;background:#4a4a4a;"></div>
<span class="t" style="left:1048.00px;top:211.30px;font-size:5.00px;line-height:6.00px;color:#2a2a2a;letter-spacing:-0.009px;font-weight:bold;">Maintenance factor</span>
<span class="t" style="left:1106.00px;top:211.30px;font-size:5.00px;line-height:6.00px;color:#555;letter-spacing:-0.059px;">0.80 (fixed)</span>
<div class="r" style="left:1047.00px;top:221.70px;width:175.30px;height:1.60px;background:#4a4a4a;"></div>
<span class="t" style="left:1048.00px;top:227.50px;font-size:5.00px;line-height:6.00px;color:#2a2a2a;letter-spacing:-0.018px;font-weight:bold;">Clearance height</span>
<span class="t" style="left:1106.00px;top:227.50px;font-size:5.00px;line-height:6.00px;color:#555;letter-spacing:-0.009px;">3.000 m</span>
<div class="r" style="left:1047.00px;top:237.80px;width:175.30px;height:1.60px;background:#4a4a4a;"></div>
<span class="t" style="left:1048.00px;top:242.90px;font-size:5.00px;line-height:6.00px;color:#2a2a2a;letter-spacing:0.028px;font-weight:bold;">Mounting height</span>
<span class="t" style="left:1106.00px;top:242.90px;font-size:5.00px;line-height:6.00px;color:#555;letter-spacing:-0.029px;">2.985 m – 3.060 m</span>
<div class="r" style="left:1047.00px;top:254.00px;width:175.30px;height:1.60px;background:#5a5a7a;"></div>
<span class="t" style="left:1048.00px;top:259.50px;font-size:5.00px;line-height:6.00px;color:#2a2a2a;letter-spacing:-0.044px;font-weight:bold;">Utilisation profile</span>
<span class="t" style="left:1106.00px;top:259.50px;font-size:5.00px;line-height:6.00px;color:#555;letter-spacing:-0.018px;">Educational premises - Educational buildings (44.1</span>
<span class="t" style="left:1106.00px;top:266.30px;font-size:5.00px;line-height:6.00px;color:#555;letter-spacing:-0.026px;">Classrooms for evening classes and adult</span>
<span class="t" style="left:1106.00px;top:273.00px;font-size:5.00px;line-height:6.00px;color:#555;letter-spacing:0.015px;">education)</span>
<div class="r" style="left:1047.00px;top:283.10px;width:175.30px;height:1.80px;background:#5a5a6a;"></div>
<div class="r" style="left:1035.30px;top:250.00px;width:200.50px;height:41.20px;border:4.60px solid #72cf00;box-sizing:border-box;"></div>
<span class="t" style="left:1047.50px;top:344.16px;font-size:3.90px;line-height:4.68px;color:#8a8a8a;letter-spacing:0.007px;">Site · school · ground floor · classroom 2</span>
<div class="r" style="left:563.00px;top:400.60px;width:41.00px;height:41.30px;background:#fff;border:1px solid #c4c4c4;box-sizing:border-box;border-radius:1.500px;"></div>
<div class="r" style="left:611.60px;top:400.60px;width:41.00px;height:41.30px;background:#9aa2ac;background:linear-gradient(155deg,#77828f 0%,#a4abb4 50%,#dcdddf 100%);border:1px solid #b0b0b0;box-sizing:border-box;border-radius:1px;"></div>
<div class="r" style="left:659.60px;top:400.60px;width:41.00px;height:41.30px;background:#fff;border:1px solid #c4c4c4;box-sizing:border-box;border-radius:1.500px;"></div>
<span class="t" style="left:565.00px;top:416.04px;font-size:10.60px;line-height:12.72px;color:#111;letter-spacing:0.049px;font-weight:bold;">oktalite</span>
<svg width="1280" height="721" viewBox="0 0 1280 721"><rect x="619" y="410" width="25" height="21" rx="1.500" fill="#d6d6d2" stroke="#8a8a88" stroke-width=".8"/><ellipse cx="631" cy="420.5" rx="10" ry="9" fill="none" stroke="#2c2c2a" stroke-width="2.200"/><ellipse cx="630.5" cy="420.5" rx="6.500" ry="6" fill="#4a4a42"/><ellipse cx="630.5" cy="420.2" rx="4.500" ry="4" fill="#b0a888"/><ellipse cx="630.5" cy="419.7" rx="2" ry="1.800" fill="#f4f0da"/><path d="M642 413.5v14" stroke="#333" stroke-width="1.500"/></svg>
<svg width="1280" height="721" viewBox="0 0 1280 721"><defs><clipPath id="pc0"><rect x="660.6" y="401.5" width="39" height="39"/></clipPath></defs><g clip-path="url(#pc0)" stroke="#b4b4b4" stroke-width=".5" fill="none"><circle cx="680.1" cy="407" r="8"/><circle cx="680.1" cy="407" r="16"/><circle cx="680.1" cy="407" r="24"/><circle cx="680.1" cy="407" r="32"/><circle cx="680.1" cy="407" r="40"/><path d="M680.1 407L740.1 407.0"/><path d="M680.1 407L738.1 422.5"/><path d="M680.1 407L732.1 437.0"/><path d="M680.1 407L722.5 449.4"/><path d="M680.1 407L710.1 459.0"/><path d="M680.1 407L695.6 465.0"/><path d="M680.1 407L680.1 467.0"/><path d="M680.1 407L664.6 465.0"/><path d="M680.1 407L650.1 459.0"/><path d="M680.1 407L637.7 449.4"/><path d="M680.1 407L628.1 437.0"/><path d="M680.1 407L622.1 422.5"/><path d="M680.1 407L620.1 407.0"/><path d="M680.1 407L622.1 391.5"/><path d="M680.1 407L628.1 377.0"/><path d="M680.1 407L637.7 364.6"/><path d="M680.1 407L650.1 355.0"/><path d="M680.1 407L664.6 349.0"/><path d="M680.1 407L680.1 347.0"/><path d="M680.1 407L695.6 349.0"/><path d="M680.1 407L710.1 355.0"/><path d="M680.1 407L722.5 364.6"/><path d="M680.1 407L732.1 377.0"/><path d="M680.1 407L738.1 391.5"/></g><circle cx="680.1" cy="407" r="4.500" fill="#fff"/><path d="M679.6 406c-2 4 -2 24 0 32.500c2 -8.500 2 -28.500 0 -32.500z" fill="#8a8af8" stroke="#3030f0" stroke-width="1.400" stroke-dasharray="3 .8"/></svg>
<span class="t" style="left:563.90px;top:454.10px;font-size:5.00px;line-height:6.00px;color:#2a2a2a;letter-spacing:0.069px;font-weight:bold;">Manufacturer</span>
<span class="t" style="left:621.90px;top:454.10px;font-size:5.00px;line-height:6.00px;color:#555;letter-spacing:0.006px;">Oktalite</span>
<div class="r" style="left:563.50px;top:464.20px;width:173.80px;height:1.60px;background:#4a4a4a;"></div>
<span class="t" style="left:563.90px;top:470.20px;font-size:5.00px;line-height:6.00px;color:#2a2a2a;letter-spacing:-0.026px;font-weight:bold;">Article name</span>
<span class="t" style="left:621.90px;top:470.20px;font-size:5.00px;line-height:6.00px;color:#555;letter-spacing:-0.105px;">16 x Sistema LED 2700K SP silver 9016</span>
<div class="r" style="left:563.50px;top:480.30px;width:173.80px;height:1.60px;background:#4a4a4a;"></div>
<span class="t" style="left:563.90px;top:486.30px;font-size:5.00px;line-height:6.00px;color:#2a2a2a;letter-spacing:-0.091px;font-weight:bold;">Article No.</span>
<span class="t" style="left:621.90px;top:486.30px;font-size:5.00px;line-height:6.00px;color:#555;">-</span>
<div class="r" style="left:563.50px;top:496.40px;width:173.80px;height:1.60px;background:#4a4a4a;"></div>
<span class="t" style="left:563.90px;top:502.40px;font-size:5.00px;line-height:6.00px;color:#2a2a2a;letter-spacing:-0.039px;font-weight:bold;">Fitting</span>
<span class="t" style="left:621.90px;top:502.40px;font-size:5.00px;line-height:6.00px;color:#555;letter-spacing:-0.097px;">1x LED 2700K 4000lm (Sistema)</span>
<div class="r" style="left:563.50px;top:512.50px;width:173.80px;height:1.60px;background:#4a4a4a;"></div>
<span class="t" style="left:563.90px;top:518.20px;font-size:5.00px;line-height:6.00px;color:#222;font-weight:bold;">Φ</span>
<span class="t" style="left:567.90px;top:521.00px;font-size:3.00px;line-height:3.60px;color:#444;letter-spacing:-0.130px;">Luminaire</span>
<span class="t" style="left:581.40px;top:518.62px;font-size:4.80px;line-height:5.76px;color:#222;letter-spacing:0.210px;font-weight:bold;">/ P</span>
<span class="t" style="left:621.90px;top:518.50px;font-size:5.00px;line-height:6.00px;color:#555;letter-spacing:-0.006px;">3394 lm / 35.0 W</span>
<div class="r" style="left:563.50px;top:528.60px;width:173.80px;height:1.60px;background:#4a4a4a;"></div>
<span class="t" style="left:563.90px;top:534.60px;font-size:5.00px;line-height:6.00px;color:#2a2a2a;letter-spacing:-0.111px;font-weight:bold;">Luminous efficacy</span>
<span class="t" style="left:621.90px;top:534.60px;font-size:5.00px;line-height:6.00px;color:#555;letter-spacing:-0.000px;">97.0 lm/W</span>
<div class="r" style="left:563.50px;top:544.70px;width:173.80px;height:1.60px;background:#4a4a4a;"></div>
<span class="t" style="left:563.90px;top:550.70px;font-size:5.00px;line-height:6.00px;color:#2a2a2a;letter-spacing:-0.184px;font-weight:bold;">CCT / CRI</span>
<span class="t" style="left:621.90px;top:550.70px;font-size:5.00px;line-height:6.00px;color:#555;letter-spacing:-0.052px;">3000 K / 91</span>
<div class="r" style="left:563.50px;top:560.80px;width:173.80px;height:1.60px;background:#4a4a4a;"></div>
<span class="t" style="left:563.90px;top:566.72px;font-size:4.80px;line-height:5.76px;color:#222;font-weight:bold;">R</span>
<span class="t" style="left:567.70px;top:569.18px;font-size:3.20px;line-height:3.84px;color:#333;letter-spacing:0.350px;font-weight:bold;">UG</span>
<span class="t" style="left:621.90px;top:566.80px;font-size:5.00px;line-height:6.00px;color:#555;letter-spacing:-0.530px;">12</span>
<div class="r" style="left:563.50px;top:576.90px;width:173.80px;height:1.60px;background:#55556a;"></div>
<div class="r" style="left:563.50px;top:561.00px;width:173.80px;height:1.60px;background:#4a4a4a;"></div>
<div class="r" style="left:550.00px;top:556.50px;width:196.80px;height:27.80px;border:4.60px solid #72cf00;box-sizing:border-box;"></div>
<span class="t" style="left:563.50px;top:622.96px;font-size:3.90px;line-height:4.68px;color:#8a8a8a;letter-spacing:0.007px;">Site · school · ground floor · classroom 2</span>
<div class="r" style="left:1051.90px;top:400.60px;width:41.00px;height:41.30px;background:#fff;border:1px solid #c4c4c4;box-sizing:border-box;border-radius:1.500px;"></div>
<div class="r" style="left:1100.50px;top:400.60px;width:41.00px;height:41.30px;background:#9aa2ac;background:linear-gradient(155deg,#77828f 0%,#a4abb4 50%,#dcdddf 100%);border:1px solid #b0b0b0;box-sizing:border-box;border-radius:1px;"></div>
<div class="r" style="left:1148.50px;top:400.60px;width:41.00px;height:41.30px;background:#fff;border:1px solid #c4c4c4;box-sizing:border-box;border-radius:1.500px;"></div>
<span class="t" style="left:1053.90px;top:416.04px;font-size:10.60px;line-height:12.72px;color:#111;letter-spacing:0.049px;font-weight:bold;">oktalite</span>
<svg width="1280" height="721" viewBox="0 0 1280 721"><rect x="1107.9" y="410" width="25" height="21" rx="1.500" fill="#d6d6d2" stroke="#8a8a88" stroke-width=".8"/><ellipse cx="1119.9" cy="420.5" rx="10" ry="9" fill="none" stroke="#2c2c2a" stroke-width="2.200"/><ellipse cx="1119.4" cy="420.5" rx="6.500" ry="6" fill="#4a4a42"/><ellipse cx="1119.4" cy="420.2" rx="4.500" ry="4" fill="#b0a888"/><ellipse cx="1119.4" cy="419.7" rx="2" ry="1.800" fill="#f4f0da"/><path d="M1130.9 413.5v14" stroke="#333" stroke-width="1.500"/></svg>
<svg width="1280" height="721" viewBox="0 0 1280 721"><defs><clipPath id="pc488"><rect x="1149.5" y="401.5" width="39" height="39"/></clipPath></defs><g clip-path="url(#pc488)" stroke="#b4b4b4" stroke-width=".5" fill="none"><circle cx="1169" cy="407" r="8"/><circle cx="1169" cy="407" r="16"/><circle cx="1169" cy="407" r="24"/><circle cx="1169" cy="407" r="32"/><circle cx="1169" cy="407" r="40"/><path d="M1169 407L1229.0 407.0"/><path d="M1169 407L1227.0 422.5"/><path d="M1169 407L1221.0 437.0"/><path d="M1169 407L1211.4 449.4"/><path d="M1169 407L1199.0 459.0"/><path d="M1169 407L1184.5 465.0"/><path d="M1169 407L1169.0 467.0"/><path d="M1169 407L1153.5 465.0"/><path d="M1169 407L1139.0 459.0"/><path d="M1169 407L1126.6 449.4"/><path d="M1169 407L1117.0 437.0"/><path d="M1169 407L1111.0 422.5"/><path d="M1169 407L1109.0 407.0"/><path d="M1169 407L1111.0 391.5"/><path d="M1169 407L1117.0 377.0"/><path d="M1169 407L1126.6 364.6"/><path d="M1169 407L1139.0 355.0"/><path d="M1169 407L1153.5 349.0"/><path d="M1169 407L1169.0 347.0"/><path d="M1169 407L1184.5 349.0"/><path d="M1169 407L1199.0 355.0"/><path d="M1169 407L1211.4 364.6"/><path d="M1169 407L1221.0 377.0"/><path d="M1169 407L1227.0 391.5"/></g><circle cx="1169" cy="407" r="4.500" fill="#fff"/><path d="M1169 407c-4 6 -11 17 -11 23c0 6 5 9.500 8 8.500c1.500 -.5 2 -1 3 -.5c1 -.5 1.500 0 3 .5c3 1 8 -2.500 8 -8.500c0 -6 -7 -17 -11 -23z" fill="none" stroke="#3a3af0" stroke-width="1.500"/></svg>
<span class="t" style="left:1052.80px;top:454.10px;font-size:5.00px;line-height:6.00px;color:#2a2a2a;letter-spacing:0.069px;font-weight:bold;">Manufacturer</span>
<span class="t" style="left:1110.80px;top:454.10px;font-size:5.00px;line-height:6.00px;color:#555;letter-spacing:0.006px;">Oktalite</span>
<div class="r" style="left:1052.40px;top:464.20px;width:173.80px;height:1.60px;background:#4a4a4a;"></div>
<span class="t" style="left:1052.80px;top:470.20px;font-size:5.00px;line-height:6.00px;color:#2a2a2a;letter-spacing:-0.026px;font-weight:bold;">Article name</span>
<span class="t" style="left:1110.80px;top:470.20px;font-size:5.00px;line-height:6.00px;color:#555;letter-spacing:-0.090px;">2 x Sistema LED 3000K VFL silver 9016</span>
<div class="r" style="left:1052.40px;top:480.30px;width:173.80px;height:1.60px;background:#4a4a4a;"></div>
<span class="t" style="left:1052.80px;top:486.30px;font-size:5.00px;line-height:6.00px;color:#2a2a2a;letter-spacing:-0.091px;font-weight:bold;">Article No.</span>
<span class="t" style="left:1110.80px;top:486.30px;font-size:5.00px;line-height:6.00px;color:#555;">-</span>
<div class="r" style="left:1052.40px;top:496.40px;width:173.80px;height:1.60px;background:#4a4a4a;"></div>
<span class="t" style="left:1052.80px;top:502.40px;font-size:5.00px;line-height:6.00px;color:#2a2a2a;letter-spacing:-0.039px;font-weight:bold;">Fitting</span>
<span class="t" style="left:1110.80px;top:502.40px;font-size:5.00px;line-height:6.00px;color:#555;letter-spacing:-0.080px;">1x LED 3000K 4000lm (Sistema)</span>
<div class="r" style="left:1052.40px;top:512.50px;width:173.80px;height:1.60px;background:#4a4a4a;"></div>
<span class="t" style="left:1052.80px;top:518.20px;font-size:5.00px;line-height:6.00px;color:#222;font-weight:bold;">Φ</span>
<span class="t" style="left:1056.80px;top:521.00px;font-size:3.00px;line-height:3.60px;color:#444;letter-spacing:-0.130px;">Luminaire</span>
<span class="t" style="left:1070.30px;top:518.62px;font-size:4.80px;line-height:5.76px;color:#222;letter-spacing:0.210px;font-weight:bold;">/ P</span>
<span class="t" style="left:1110.80px;top:518.50px;font-size:5.00px;line-height:6.00px;color:#555;letter-spacing:-0.006px;">3297 lm / 35.0 W</span>
<div class="r" style="left:1052.40px;top:528.60px;width:173.80px;height:1.60px;background:#4a4a4a;"></div>
<span class="t" style="left:1052.80px;top:534.60px;font-size:5.00px;line-height:6.00px;color:#2a2a2a;letter-spacing:-0.111px;font-weight:bold;">Luminous efficacy</span>
<span class="t" style="left:1110.80px;top:534.60px;font-size:5.00px;line-height:6.00px;color:#555;letter-spacing:-0.000px;">91.5 lm/W</span>
<div class="r" style="left:1052.40px;top:544.70px;width:173.80px;height:1.60px;background:#4a4a4a;"></div>
<span class="t" style="left:1052.80px;top:550.70px;font-size:5.00px;line-height:6.00px;color:#2a2a2a;letter-spacing:-0.184px;font-weight:bold;">CCT / CRI</span>
<span class="t" style="left:1110.80px;top:550.70px;font-size:5.00px;line-height:6.00px;color:#555;letter-spacing:-0.052px;">3000 K / 82</span>
<div class="r" style="left:1052.40px;top:560.80px;width:173.80px;height:1.60px;background:#4a4a4a;"></div>
<span class="t" style="left:1052.80px;top:566.72px;font-size:4.80px;line-height:5.76px;color:#222;font-weight:bold;">R</span>
<span class="t" style="left:1056.60px;top:569.18px;font-size:3.20px;line-height:3.84px;color:#333;letter-spacing:0.350px;font-weight:bold;">UG</span>
<span class="t" style="left:1110.80px;top:566.80px;font-size:5.00px;line-height:6.00px;color:#555;letter-spacing:-0.530px;">16</span>
<div class="r" style="left:1052.40px;top:576.90px;width:173.80px;height:1.60px;background:#55556a;"></div>
<div class="r" style="left:1052.40px;top:561.00px;width:173.80px;height:1.60px;background:#4a4a4a;"></div>
<div class="r" style="left:1038.90px;top:556.50px;width:196.80px;height:27.80px;border:4.60px solid #72cf00;box-sizing:border-box;"></div>
<span class="t" style="left:1052.40px;top:622.96px;font-size:3.90px;line-height:4.68px;color:#8a8a8a;letter-spacing:0.007px;">Site · school · ground floor · classroom 2</span>
<div class="r" style="left:563.00px;top:680.50px;width:41.00px;height:3.50px;background:#fff;border:1px solid #c0c0c0;border-bottom:none;box-sizing:border-box;border-radius:1.500px 1.500px 0 0;"></div>
<div class="r" style="left:611.60px;top:680.50px;width:41.00px;height:3.50px;background:#8a94a0;border:1px solid #c0c0c0;border-bottom:none;box-sizing:border-box;border-radius:1.500px 1.500px 0 0;"></div>
<div class="r" style="left:659.60px;top:680.50px;width:41.00px;height:3.50px;background:#fff;border:1px solid #c0c0c0;border-bottom:none;box-sizing:border-box;border-radius:1.500px 1.500px 0 0;"></div>
<div class="r" style="left:1051.90px;top:680.50px;width:41.00px;height:3.50px;background:#fff;border:1px solid #c0c0c0;border-bottom:none;box-sizing:border-box;border-radius:1.500px 1.500px 0 0;"></div>
<div class="r" style="left:1100.50px;top:680.50px;width:41.00px;height:3.50px;background:#8a94a0;border:1px solid #c0c0c0;border-bottom:none;box-sizing:border-box;border-radius:1.500px 1.500px 0 0;"></div>
<div class="r" style="left:1148.50px;top:680.50px;width:41.00px;height:3.50px;background:#fff;border:1px solid #c0c0c0;border-bottom:none;box-sizing:border-box;border-radius:1.500px 1.500px 0 0;"></div>
</body></html>
